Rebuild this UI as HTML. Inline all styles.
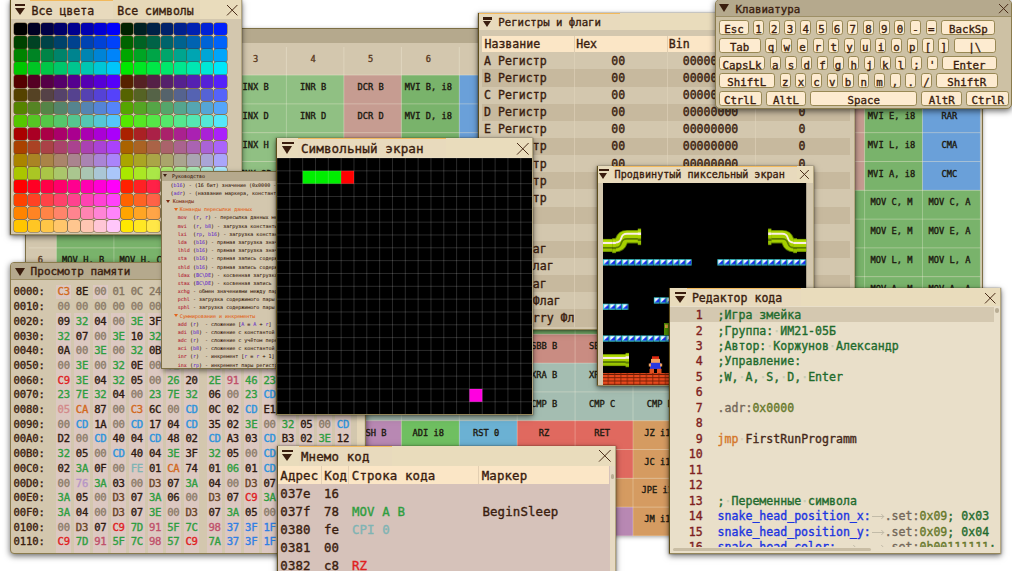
<!DOCTYPE html><html lang="ru"><head><meta charset="utf-8"><title>i8080 emulator</title><style>
html,body{margin:0;padding:0}
body{width:1012px;height:571px;overflow:hidden;background:#fff;position:relative;font-family:"DejaVu Sans Mono","Liberation Mono",monospace;color:#3a1d0e}
.win{position:absolute;background:#d3c7ae;box-sizing:border-box;border:1px solid #7d6f45;box-shadow:0 2px 6px rgba(0,0,0,.6);overflow:hidden}
.abs{position:absolute}
.wa{border-color:#e9dcbc #b3a680 #94865a #5e4e1c;border-top-width:0;box-shadow:0 0 1px .3px rgba(35,25,0,.45),0 2px 6px rgba(0,0,0,.55)}
.tb{position:absolute;left:0;top:0;right:0;background:#e9dcbc}
.tbi{background:#b5a98d}
.tab{position:absolute;top:0;bottom:0;background:#e8dabd;border-top:1px solid #f2b95c;box-sizing:border-box}
.t{position:absolute;white-space:pre}
body{-webkit-text-stroke:.36px currentColor}
.tri{position:absolute;width:0;height:0;border-style:solid;border-color:#3a1d0e transparent transparent transparent}
.bar{position:absolute;background:#3a1d0e}
svg{position:absolute;overflow:visible}
.c{position:absolute;text-align:center;font-size:8.70px;color:#1d1a10;white-space:pre;padding-right:4px;letter-spacing:.03px}
.k{position:absolute;box-sizing:border-box;background:#fdebd0;border:1px solid #988854;border-radius:2.8px;text-align:center;font-size:10.75px;white-space:pre}
.cg i{position:absolute;width:12.7px;height:12.5px;border-radius:2.5px;box-shadow:0 0 0 .5px rgba(80,55,20,.7)}</style></head><body>
<div class="win" style="left:25px;top:28px;width:958px;height:508px;box-shadow:0 1px 4px rgba(0,0,0,.35);border-bottom:none">
<div class="tb tbi" style="height:14px"></div>
<svg style="left:0;top:0" width="958" height="509"><rect x="2.60" y="18.00" width="951.80" height="488.90" fill="#d3c7ae"/><rect x="30.40" y="46.10" width="57.50" height="28.80" fill="#c9bda3"/><rect x="87.90" y="46.10" width="115.00" height="28.80" fill="#79b36b"/><rect x="202.90" y="46.10" width="115.00" height="28.80" fill="#90c083"/><rect x="317.90" y="46.10" width="57.50" height="28.80" fill="#c69c91"/><rect x="375.40" y="46.10" width="57.90" height="28.80" fill="#79b36b"/><rect x="433.30" y="46.10" width="57.90" height="28.80" fill="#6aa0d9"/><rect x="491.20" y="46.10" width="57.90" height="28.80" fill="#c9bda3"/><rect x="549.10" y="46.10" width="57.90" height="28.80" fill="#90c083"/><rect x="607.00" y="46.10" width="57.90" height="28.80" fill="#79b36b"/><rect x="664.90" y="46.10" width="57.90" height="28.80" fill="#c69c91"/><rect x="722.80" y="46.10" width="57.90" height="28.80" fill="#90c083"/><rect x="780.70" y="46.10" width="57.90" height="28.80" fill="#c69c91"/><rect x="838.60" y="46.10" width="57.90" height="28.80" fill="#79b36b"/><rect x="896.50" y="46.10" width="57.90" height="28.80" fill="#6aa0d9"/><rect x="30.40" y="74.90" width="57.50" height="28.80" fill="#c9bda3"/><rect x="87.90" y="74.90" width="115.00" height="28.80" fill="#79b36b"/><rect x="202.90" y="74.90" width="115.00" height="28.80" fill="#90c083"/><rect x="317.90" y="74.90" width="57.50" height="28.80" fill="#c69c91"/><rect x="375.40" y="74.90" width="57.90" height="28.80" fill="#79b36b"/><rect x="433.30" y="74.90" width="57.90" height="28.80" fill="#6aa0d9"/><rect x="491.20" y="74.90" width="57.90" height="28.80" fill="#c9bda3"/><rect x="549.10" y="74.90" width="57.90" height="28.80" fill="#90c083"/><rect x="607.00" y="74.90" width="57.90" height="28.80" fill="#79b36b"/><rect x="664.90" y="74.90" width="57.90" height="28.80" fill="#c69c91"/><rect x="722.80" y="74.90" width="57.90" height="28.80" fill="#90c083"/><rect x="780.70" y="74.90" width="57.90" height="28.80" fill="#c69c91"/><rect x="838.60" y="74.90" width="57.90" height="28.80" fill="#79b36b"/><rect x="896.50" y="74.90" width="57.90" height="28.80" fill="#6aa0d9"/><rect x="30.40" y="103.70" width="57.50" height="28.80" fill="#c9bda3"/><rect x="87.90" y="103.70" width="115.00" height="28.80" fill="#79b36b"/><rect x="202.90" y="103.70" width="115.00" height="28.80" fill="#90c083"/><rect x="317.90" y="103.70" width="57.50" height="28.80" fill="#c69c91"/><rect x="375.40" y="103.70" width="57.90" height="28.80" fill="#79b36b"/><rect x="433.30" y="103.70" width="57.90" height="28.80" fill="#6aa0d9"/><rect x="491.20" y="103.70" width="57.90" height="28.80" fill="#c9bda3"/><rect x="549.10" y="103.70" width="57.90" height="28.80" fill="#90c083"/><rect x="607.00" y="103.70" width="57.90" height="28.80" fill="#79b36b"/><rect x="664.90" y="103.70" width="57.90" height="28.80" fill="#c69c91"/><rect x="722.80" y="103.70" width="57.90" height="28.80" fill="#90c083"/><rect x="780.70" y="103.70" width="57.90" height="28.80" fill="#c69c91"/><rect x="838.60" y="103.70" width="57.90" height="28.80" fill="#79b36b"/><rect x="896.50" y="103.70" width="57.90" height="28.80" fill="#6aa0d9"/><rect x="30.40" y="132.50" width="57.50" height="28.80" fill="#c9bda3"/><rect x="87.90" y="132.50" width="115.00" height="28.80" fill="#79b36b"/><rect x="202.90" y="132.50" width="115.00" height="28.80" fill="#90c083"/><rect x="317.90" y="132.50" width="57.50" height="28.80" fill="#c69c91"/><rect x="375.40" y="132.50" width="57.90" height="28.80" fill="#79b36b"/><rect x="433.30" y="132.50" width="57.90" height="28.80" fill="#6aa0d9"/><rect x="491.20" y="132.50" width="57.90" height="28.80" fill="#c9bda3"/><rect x="549.10" y="132.50" width="57.90" height="28.80" fill="#90c083"/><rect x="607.00" y="132.50" width="57.90" height="28.80" fill="#79b36b"/><rect x="664.90" y="132.50" width="57.90" height="28.80" fill="#c69c91"/><rect x="722.80" y="132.50" width="57.90" height="28.80" fill="#90c083"/><rect x="780.70" y="132.50" width="57.90" height="28.80" fill="#c69c91"/><rect x="838.60" y="132.50" width="57.90" height="28.80" fill="#79b36b"/><rect x="896.50" y="132.50" width="57.90" height="28.80" fill="#6aa0d9"/><rect x="30.40" y="161.30" width="924.00" height="28.80" fill="#79b36b"/><rect x="30.40" y="190.10" width="924.00" height="28.80" fill="#79b36b"/><rect x="30.40" y="218.90" width="924.00" height="28.80" fill="#79b36b"/><rect x="30.40" y="247.70" width="345.00" height="28.80" fill="#79b36b"/><rect x="375.40" y="247.70" width="57.90" height="28.80" fill="#b79bc4"/><rect x="433.30" y="247.70" width="521.10" height="28.80" fill="#79b36b"/><rect x="30.40" y="276.50" width="924.00" height="28.80" fill="#79b36b"/><rect x="30.40" y="305.30" width="924.00" height="28.80" fill="#c98c82"/><rect x="30.40" y="334.10" width="924.00" height="28.80" fill="#a4bdb1"/><rect x="30.40" y="362.90" width="924.00" height="28.80" fill="#a4bdb1"/><rect x="30.40" y="391.70" width="57.50" height="28.80" fill="#e0695f"/><rect x="87.90" y="391.70" width="57.50" height="28.80" fill="#b888b3"/><rect x="145.40" y="391.70" width="115.00" height="28.80" fill="#d59b61"/><rect x="260.40" y="391.70" width="57.50" height="28.80" fill="#5fa6e0"/><rect x="317.90" y="391.70" width="57.50" height="28.80" fill="#b888b3"/><rect x="375.40" y="391.70" width="57.90" height="28.80" fill="#6fbf61"/><rect x="433.30" y="391.70" width="57.90" height="28.80" fill="#6bb1d3"/><rect x="491.20" y="391.70" width="115.80" height="28.80" fill="#e0695f"/><rect x="607.00" y="391.70" width="115.80" height="28.80" fill="#d59b61"/><rect x="722.80" y="391.70" width="115.80" height="28.80" fill="#5fa6e0"/><rect x="838.60" y="391.70" width="57.90" height="28.80" fill="#6fbf61"/><rect x="896.50" y="391.70" width="57.90" height="28.80" fill="#6bb1d3"/><rect x="30.40" y="420.50" width="57.50" height="28.80" fill="#e0695f"/><rect x="87.90" y="420.50" width="57.50" height="28.80" fill="#b888b3"/><rect x="145.40" y="420.50" width="57.50" height="28.80" fill="#d59b61"/><rect x="202.90" y="420.50" width="57.50" height="28.80" fill="#c2a46a"/><rect x="260.40" y="420.50" width="57.50" height="28.80" fill="#5fa6e0"/><rect x="317.90" y="420.50" width="57.50" height="28.80" fill="#b888b3"/><rect x="375.40" y="420.50" width="57.90" height="28.80" fill="#c98c82"/><rect x="433.30" y="420.50" width="57.90" height="28.80" fill="#6bb1d3"/><rect x="491.20" y="420.50" width="115.80" height="28.80" fill="#e0695f"/><rect x="607.00" y="420.50" width="57.90" height="28.80" fill="#d59b61"/><rect x="664.90" y="420.50" width="57.90" height="28.80" fill="#c2a46a"/><rect x="722.80" y="420.50" width="115.80" height="28.80" fill="#5fa6e0"/><rect x="838.60" y="420.50" width="57.90" height="28.80" fill="#c98c82"/><rect x="896.50" y="420.50" width="57.90" height="28.80" fill="#6bb1d3"/><rect x="30.40" y="449.30" width="57.50" height="28.80" fill="#e0695f"/><rect x="87.90" y="449.30" width="57.50" height="28.80" fill="#b888b3"/><rect x="145.40" y="449.30" width="57.50" height="28.80" fill="#d59b61"/><rect x="202.90" y="449.30" width="57.50" height="28.80" fill="#b888b3"/><rect x="260.40" y="449.30" width="57.50" height="28.80" fill="#5fa6e0"/><rect x="317.90" y="449.30" width="57.50" height="28.80" fill="#b888b3"/><rect x="375.40" y="449.30" width="57.90" height="28.80" fill="#a4bdb1"/><rect x="433.30" y="449.30" width="57.90" height="28.80" fill="#6bb1d3"/><rect x="491.20" y="449.30" width="57.90" height="28.80" fill="#e0695f"/><rect x="549.10" y="449.30" width="115.80" height="28.80" fill="#d59b61"/><rect x="664.90" y="449.30" width="57.90" height="28.80" fill="#79b36b"/><rect x="722.80" y="449.30" width="115.80" height="28.80" fill="#5fa6e0"/><rect x="838.60" y="449.30" width="57.90" height="28.80" fill="#a4bdb1"/><rect x="896.50" y="449.30" width="57.90" height="28.80" fill="#6bb1d3"/><rect x="30.40" y="478.10" width="57.50" height="28.80" fill="#e0695f"/><rect x="87.90" y="478.10" width="57.50" height="28.80" fill="#b888b3"/><rect x="145.40" y="478.10" width="57.50" height="28.80" fill="#d59b61"/><rect x="202.90" y="478.10" width="57.50" height="28.80" fill="#c9bda3"/><rect x="260.40" y="478.10" width="57.50" height="28.80" fill="#5fa6e0"/><rect x="317.90" y="478.10" width="57.50" height="28.80" fill="#b888b3"/><rect x="375.40" y="478.10" width="57.90" height="28.80" fill="#a4bdb1"/><rect x="433.30" y="478.10" width="57.90" height="28.80" fill="#6bb1d3"/><rect x="491.20" y="478.10" width="57.90" height="28.80" fill="#e0695f"/><rect x="549.10" y="478.10" width="57.90" height="28.80" fill="#b888b3"/><rect x="607.00" y="478.10" width="57.90" height="28.80" fill="#d59b61"/><rect x="664.90" y="478.10" width="57.90" height="28.80" fill="#c9bda3"/><rect x="722.80" y="478.10" width="115.80" height="28.80" fill="#5fa6e0"/><rect x="838.60" y="478.10" width="57.90" height="28.80" fill="#a4bdb1"/><rect x="896.50" y="478.10" width="57.90" height="28.80" fill="#6bb1d3"/><path d="M30.40 18.00V506.90M87.90 18.00V506.90M145.40 18.00V506.90M202.90 18.00V506.90M260.40 18.00V506.90M317.90 18.00V506.90M375.40 18.00V506.90M433.30 18.00V506.90M491.20 18.00V506.90M549.10 18.00V506.90M607.00 18.00V506.90M664.90 18.00V506.90M722.80 18.00V506.90M780.70 18.00V506.90M838.60 18.00V506.90M896.50 18.00V506.90M954.40 18.00V506.90M2.60 46.10H954.40M2.60 74.90H954.40M2.60 103.70H954.40M2.60 132.50H954.40M2.60 161.30H954.40M2.60 190.10H954.40M2.60 218.90H954.40M2.60 247.70H954.40M2.60 276.50H954.40M2.60 305.30H954.40M2.60 334.10H954.40M2.60 362.90H954.40M2.60 391.70H954.40M2.60 420.50H954.40M2.60 449.30H954.40M2.60 478.10H954.40M2.60 506.90H954.40" stroke="rgba(255,250,235,.28)" stroke-width="1" fill="none"/></svg>
<div class="c" style="left:30.40px;top:18.00px;width:53.50px;height:28.10px;line-height:24.70px;color:#5a3a22">0</div><div class="c" style="left:87.90px;top:18.00px;width:53.50px;height:28.10px;line-height:24.70px;color:#5a3a22">1</div><div class="c" style="left:145.40px;top:18.00px;width:53.50px;height:28.10px;line-height:24.70px;color:#5a3a22">2</div><div class="c" style="left:202.90px;top:18.00px;width:53.50px;height:28.10px;line-height:24.70px;color:#5a3a22">3</div><div class="c" style="left:260.40px;top:18.00px;width:53.50px;height:28.10px;line-height:24.70px;color:#5a3a22">4</div><div class="c" style="left:317.90px;top:18.00px;width:53.50px;height:28.10px;line-height:24.70px;color:#5a3a22">5</div><div class="c" style="left:375.40px;top:18.00px;width:53.90px;height:28.10px;line-height:24.70px;color:#5a3a22">6</div><div class="c" style="left:433.30px;top:18.00px;width:53.90px;height:28.10px;line-height:24.70px;color:#5a3a22">7</div><div class="c" style="left:491.20px;top:18.00px;width:53.90px;height:28.10px;line-height:24.70px;color:#5a3a22">8</div><div class="c" style="left:549.10px;top:18.00px;width:53.90px;height:28.10px;line-height:24.70px;color:#5a3a22">9</div><div class="c" style="left:607.00px;top:18.00px;width:53.90px;height:28.10px;line-height:24.70px;color:#5a3a22">A</div><div class="c" style="left:664.90px;top:18.00px;width:53.90px;height:28.10px;line-height:24.70px;color:#5a3a22">B</div><div class="c" style="left:722.80px;top:18.00px;width:53.90px;height:28.10px;line-height:24.70px;color:#5a3a22">C</div><div class="c" style="left:780.70px;top:18.00px;width:53.90px;height:28.10px;line-height:24.70px;color:#5a3a22">D</div><div class="c" style="left:838.60px;top:18.00px;width:53.90px;height:28.10px;line-height:24.70px;color:#5a3a22">E</div><div class="c" style="left:896.50px;top:18.00px;width:53.90px;height:28.10px;line-height:24.70px;color:#5a3a22">F</div><div class="c" style="left:2.60px;top:46.10px;width:23.80px;height:28.80px;line-height:24.40px;color:#5a3a22">0</div><div class="c" style="left:30.40px;top:46.10px;width:53.50px;height:28.80px;line-height:24.40px">NOP</div><div class="c" style="left:87.90px;top:46.10px;width:53.50px;height:28.80px;line-height:24.40px">LXI B, i16</div><div class="c" style="left:145.40px;top:46.10px;width:53.50px;height:28.80px;line-height:24.40px">STAX B</div><div class="c" style="left:202.90px;top:46.10px;width:53.50px;height:28.80px;line-height:24.40px">INX B</div><div class="c" style="left:260.40px;top:46.10px;width:53.50px;height:28.80px;line-height:24.40px">INR B</div><div class="c" style="left:317.90px;top:46.10px;width:53.50px;height:28.80px;line-height:24.40px">DCR B</div><div class="c" style="left:375.40px;top:46.10px;width:53.90px;height:28.80px;line-height:24.40px">MVI B, i8</div><div class="c" style="left:433.30px;top:46.10px;width:53.90px;height:28.80px;line-height:24.40px">RLC</div><div class="c" style="left:491.20px;top:46.10px;width:53.90px;height:28.80px;line-height:24.40px">*NOP</div><div class="c" style="left:549.10px;top:46.10px;width:53.90px;height:28.80px;line-height:24.40px">DAD B</div><div class="c" style="left:607.00px;top:46.10px;width:53.90px;height:28.80px;line-height:24.40px">LDAX B</div><div class="c" style="left:664.90px;top:46.10px;width:53.90px;height:28.80px;line-height:24.40px">DCX B</div><div class="c" style="left:722.80px;top:46.10px;width:53.90px;height:28.80px;line-height:24.40px">INR C</div><div class="c" style="left:780.70px;top:46.10px;width:53.90px;height:28.80px;line-height:24.40px">DCR C</div><div class="c" style="left:838.60px;top:46.10px;width:53.90px;height:28.80px;line-height:24.40px">MVI C, i8</div><div class="c" style="left:896.50px;top:46.10px;width:53.90px;height:28.80px;line-height:24.40px">RRC</div><div class="c" style="left:2.60px;top:74.90px;width:23.80px;height:28.80px;line-height:24.40px;color:#5a3a22">1</div><div class="c" style="left:30.40px;top:74.90px;width:53.50px;height:28.80px;line-height:24.40px">*NOP</div><div class="c" style="left:87.90px;top:74.90px;width:53.50px;height:28.80px;line-height:24.40px">LXI D, i16</div><div class="c" style="left:145.40px;top:74.90px;width:53.50px;height:28.80px;line-height:24.40px">STAX D</div><div class="c" style="left:202.90px;top:74.90px;width:53.50px;height:28.80px;line-height:24.40px">INX D</div><div class="c" style="left:260.40px;top:74.90px;width:53.50px;height:28.80px;line-height:24.40px">INR D</div><div class="c" style="left:317.90px;top:74.90px;width:53.50px;height:28.80px;line-height:24.40px">DCR D</div><div class="c" style="left:375.40px;top:74.90px;width:53.90px;height:28.80px;line-height:24.40px">MVI D, i8</div><div class="c" style="left:433.30px;top:74.90px;width:53.90px;height:28.80px;line-height:24.40px">RAL</div><div class="c" style="left:491.20px;top:74.90px;width:53.90px;height:28.80px;line-height:24.40px">*NOP</div><div class="c" style="left:549.10px;top:74.90px;width:53.90px;height:28.80px;line-height:24.40px">DAD D</div><div class="c" style="left:607.00px;top:74.90px;width:53.90px;height:28.80px;line-height:24.40px">LDAX D</div><div class="c" style="left:664.90px;top:74.90px;width:53.90px;height:28.80px;line-height:24.40px">DCX D</div><div class="c" style="left:722.80px;top:74.90px;width:53.90px;height:28.80px;line-height:24.40px">INR E</div><div class="c" style="left:780.70px;top:74.90px;width:53.90px;height:28.80px;line-height:24.40px">DCR E</div><div class="c" style="left:838.60px;top:74.90px;width:53.90px;height:28.80px;line-height:24.40px">MVI E, i8</div><div class="c" style="left:896.50px;top:74.90px;width:53.90px;height:28.80px;line-height:24.40px">RAR</div><div class="c" style="left:2.60px;top:103.70px;width:23.80px;height:28.80px;line-height:24.40px;color:#5a3a22">2</div><div class="c" style="left:30.40px;top:103.70px;width:53.50px;height:28.80px;line-height:24.40px">*NOP</div><div class="c" style="left:87.90px;top:103.70px;width:53.50px;height:28.80px;line-height:24.40px">LXI H, i16</div><div class="c" style="left:145.40px;top:103.70px;width:53.50px;height:28.80px;line-height:24.40px">SHLD a16</div><div class="c" style="left:202.90px;top:103.70px;width:53.50px;height:28.80px;line-height:24.40px">INX H</div><div class="c" style="left:260.40px;top:103.70px;width:53.50px;height:28.80px;line-height:24.40px">INR H</div><div class="c" style="left:317.90px;top:103.70px;width:53.50px;height:28.80px;line-height:24.40px">DCR H</div><div class="c" style="left:375.40px;top:103.70px;width:53.90px;height:28.80px;line-height:24.40px">MVI H, i8</div><div class="c" style="left:433.30px;top:103.70px;width:53.90px;height:28.80px;line-height:24.40px">DAA</div><div class="c" style="left:491.20px;top:103.70px;width:53.90px;height:28.80px;line-height:24.40px">*NOP</div><div class="c" style="left:549.10px;top:103.70px;width:53.90px;height:28.80px;line-height:24.40px">DAD H</div><div class="c" style="left:607.00px;top:103.70px;width:53.90px;height:28.80px;line-height:24.40px">LHLD a16</div><div class="c" style="left:664.90px;top:103.70px;width:53.90px;height:28.80px;line-height:24.40px">DCX H</div><div class="c" style="left:722.80px;top:103.70px;width:53.90px;height:28.80px;line-height:24.40px">INR L</div><div class="c" style="left:780.70px;top:103.70px;width:53.90px;height:28.80px;line-height:24.40px">DCR L</div><div class="c" style="left:838.60px;top:103.70px;width:53.90px;height:28.80px;line-height:24.40px">MVI L, i8</div><div class="c" style="left:896.50px;top:103.70px;width:53.90px;height:28.80px;line-height:24.40px">CMA</div><div class="c" style="left:2.60px;top:132.50px;width:23.80px;height:28.80px;line-height:24.40px;color:#5a3a22">3</div><div class="c" style="left:30.40px;top:132.50px;width:53.50px;height:28.80px;line-height:24.40px">*NOP</div><div class="c" style="left:87.90px;top:132.50px;width:53.50px;height:28.80px;line-height:24.40px">LXI SP, i16</div><div class="c" style="left:145.40px;top:132.50px;width:53.50px;height:28.80px;line-height:24.40px">STA a16</div><div class="c" style="left:202.90px;top:132.50px;width:53.50px;height:28.80px;line-height:24.40px">INX SP</div><div class="c" style="left:260.40px;top:132.50px;width:53.50px;height:28.80px;line-height:24.40px">INR M</div><div class="c" style="left:317.90px;top:132.50px;width:53.50px;height:28.80px;line-height:24.40px">DCR M</div><div class="c" style="left:375.40px;top:132.50px;width:53.90px;height:28.80px;line-height:24.40px">MVI M, i8</div><div class="c" style="left:433.30px;top:132.50px;width:53.90px;height:28.80px;line-height:24.40px">STC</div><div class="c" style="left:491.20px;top:132.50px;width:53.90px;height:28.80px;line-height:24.40px">*NOP</div><div class="c" style="left:549.10px;top:132.50px;width:53.90px;height:28.80px;line-height:24.40px">DAD SP</div><div class="c" style="left:607.00px;top:132.50px;width:53.90px;height:28.80px;line-height:24.40px">LDA a16</div><div class="c" style="left:664.90px;top:132.50px;width:53.90px;height:28.80px;line-height:24.40px">DCX SP</div><div class="c" style="left:722.80px;top:132.50px;width:53.90px;height:28.80px;line-height:24.40px">INR A</div><div class="c" style="left:780.70px;top:132.50px;width:53.90px;height:28.80px;line-height:24.40px">DCR A</div><div class="c" style="left:838.60px;top:132.50px;width:53.90px;height:28.80px;line-height:24.40px">MVI A, i8</div><div class="c" style="left:896.50px;top:132.50px;width:53.90px;height:28.80px;line-height:24.40px">CMC</div><div class="c" style="left:2.60px;top:161.30px;width:23.80px;height:28.80px;line-height:24.40px;color:#5a3a22">4</div><div class="c" style="left:30.40px;top:161.30px;width:53.50px;height:28.80px;line-height:24.40px">MOV B, B</div><div class="c" style="left:87.90px;top:161.30px;width:53.50px;height:28.80px;line-height:24.40px">MOV B, C</div><div class="c" style="left:145.40px;top:161.30px;width:53.50px;height:28.80px;line-height:24.40px">MOV B, D</div><div class="c" style="left:202.90px;top:161.30px;width:53.50px;height:28.80px;line-height:24.40px">MOV B, E</div><div class="c" style="left:260.40px;top:161.30px;width:53.50px;height:28.80px;line-height:24.40px">MOV B, H</div><div class="c" style="left:317.90px;top:161.30px;width:53.50px;height:28.80px;line-height:24.40px">MOV B, L</div><div class="c" style="left:375.40px;top:161.30px;width:53.90px;height:28.80px;line-height:24.40px">MOV B, M</div><div class="c" style="left:433.30px;top:161.30px;width:53.90px;height:28.80px;line-height:24.40px">MOV B, A</div><div class="c" style="left:491.20px;top:161.30px;width:53.90px;height:28.80px;line-height:24.40px">MOV C, B</div><div class="c" style="left:549.10px;top:161.30px;width:53.90px;height:28.80px;line-height:24.40px">MOV C, C</div><div class="c" style="left:607.00px;top:161.30px;width:53.90px;height:28.80px;line-height:24.40px">MOV C, D</div><div class="c" style="left:664.90px;top:161.30px;width:53.90px;height:28.80px;line-height:24.40px">MOV C, E</div><div class="c" style="left:722.80px;top:161.30px;width:53.90px;height:28.80px;line-height:24.40px">MOV C, H</div><div class="c" style="left:780.70px;top:161.30px;width:53.90px;height:28.80px;line-height:24.40px">MOV C, L</div><div class="c" style="left:838.60px;top:161.30px;width:53.90px;height:28.80px;line-height:24.40px">MOV C, M</div><div class="c" style="left:896.50px;top:161.30px;width:53.90px;height:28.80px;line-height:24.40px">MOV C, A</div><div class="c" style="left:2.60px;top:190.10px;width:23.80px;height:28.80px;line-height:24.40px;color:#5a3a22">5</div><div class="c" style="left:30.40px;top:190.10px;width:53.50px;height:28.80px;line-height:24.40px">MOV D, B</div><div class="c" style="left:87.90px;top:190.10px;width:53.50px;height:28.80px;line-height:24.40px">MOV D, C</div><div class="c" style="left:145.40px;top:190.10px;width:53.50px;height:28.80px;line-height:24.40px">MOV D, D</div><div class="c" style="left:202.90px;top:190.10px;width:53.50px;height:28.80px;line-height:24.40px">MOV D, E</div><div class="c" style="left:260.40px;top:190.10px;width:53.50px;height:28.80px;line-height:24.40px">MOV D, H</div><div class="c" style="left:317.90px;top:190.10px;width:53.50px;height:28.80px;line-height:24.40px">MOV D, L</div><div class="c" style="left:375.40px;top:190.10px;width:53.90px;height:28.80px;line-height:24.40px">MOV D, M</div><div class="c" style="left:433.30px;top:190.10px;width:53.90px;height:28.80px;line-height:24.40px">MOV D, A</div><div class="c" style="left:491.20px;top:190.10px;width:53.90px;height:28.80px;line-height:24.40px">MOV E, B</div><div class="c" style="left:549.10px;top:190.10px;width:53.90px;height:28.80px;line-height:24.40px">MOV E, C</div><div class="c" style="left:607.00px;top:190.10px;width:53.90px;height:28.80px;line-height:24.40px">MOV E, D</div><div class="c" style="left:664.90px;top:190.10px;width:53.90px;height:28.80px;line-height:24.40px">MOV E, E</div><div class="c" style="left:722.80px;top:190.10px;width:53.90px;height:28.80px;line-height:24.40px">MOV E, H</div><div class="c" style="left:780.70px;top:190.10px;width:53.90px;height:28.80px;line-height:24.40px">MOV E, L</div><div class="c" style="left:838.60px;top:190.10px;width:53.90px;height:28.80px;line-height:24.40px">MOV E, M</div><div class="c" style="left:896.50px;top:190.10px;width:53.90px;height:28.80px;line-height:24.40px">MOV E, A</div><div class="c" style="left:2.60px;top:218.90px;width:23.80px;height:28.80px;line-height:24.40px;color:#5a3a22">6</div><div class="c" style="left:30.40px;top:218.90px;width:53.50px;height:28.80px;line-height:24.40px">MOV H, B</div><div class="c" style="left:87.90px;top:218.90px;width:53.50px;height:28.80px;line-height:24.40px">MOV H, C</div><div class="c" style="left:145.40px;top:218.90px;width:53.50px;height:28.80px;line-height:24.40px">MOV H, D</div><div class="c" style="left:202.90px;top:218.90px;width:53.50px;height:28.80px;line-height:24.40px">MOV H, E</div><div class="c" style="left:260.40px;top:218.90px;width:53.50px;height:28.80px;line-height:24.40px">MOV H, H</div><div class="c" style="left:317.90px;top:218.90px;width:53.50px;height:28.80px;line-height:24.40px">MOV H, L</div><div class="c" style="left:375.40px;top:218.90px;width:53.90px;height:28.80px;line-height:24.40px">MOV H, M</div><div class="c" style="left:433.30px;top:218.90px;width:53.90px;height:28.80px;line-height:24.40px">MOV H, A</div><div class="c" style="left:491.20px;top:218.90px;width:53.90px;height:28.80px;line-height:24.40px">MOV L, B</div><div class="c" style="left:549.10px;top:218.90px;width:53.90px;height:28.80px;line-height:24.40px">MOV L, C</div><div class="c" style="left:607.00px;top:218.90px;width:53.90px;height:28.80px;line-height:24.40px">MOV L, D</div><div class="c" style="left:664.90px;top:218.90px;width:53.90px;height:28.80px;line-height:24.40px">MOV L, E</div><div class="c" style="left:722.80px;top:218.90px;width:53.90px;height:28.80px;line-height:24.40px">MOV L, H</div><div class="c" style="left:780.70px;top:218.90px;width:53.90px;height:28.80px;line-height:24.40px">MOV L, L</div><div class="c" style="left:838.60px;top:218.90px;width:53.90px;height:28.80px;line-height:24.40px">MOV L, M</div><div class="c" style="left:896.50px;top:218.90px;width:53.90px;height:28.80px;line-height:24.40px">MOV L, A</div><div class="c" style="left:2.60px;top:247.70px;width:23.80px;height:28.80px;line-height:24.40px;color:#5a3a22">7</div><div class="c" style="left:30.40px;top:247.70px;width:53.50px;height:28.80px;line-height:24.40px">MOV M, B</div><div class="c" style="left:87.90px;top:247.70px;width:53.50px;height:28.80px;line-height:24.40px">MOV M, C</div><div class="c" style="left:145.40px;top:247.70px;width:53.50px;height:28.80px;line-height:24.40px">MOV M, D</div><div class="c" style="left:202.90px;top:247.70px;width:53.50px;height:28.80px;line-height:24.40px">MOV M, E</div><div class="c" style="left:260.40px;top:247.70px;width:53.50px;height:28.80px;line-height:24.40px">MOV M, H</div><div class="c" style="left:317.90px;top:247.70px;width:53.50px;height:28.80px;line-height:24.40px">MOV M, L</div><div class="c" style="left:375.40px;top:247.70px;width:53.90px;height:28.80px;line-height:24.40px">HLT</div><div class="c" style="left:433.30px;top:247.70px;width:53.90px;height:28.80px;line-height:24.40px">MOV M, A</div><div class="c" style="left:491.20px;top:247.70px;width:53.90px;height:28.80px;line-height:24.40px">MOV A, B</div><div class="c" style="left:549.10px;top:247.70px;width:53.90px;height:28.80px;line-height:24.40px">MOV A, C</div><div class="c" style="left:607.00px;top:247.70px;width:53.90px;height:28.80px;line-height:24.40px">MOV A, D</div><div class="c" style="left:664.90px;top:247.70px;width:53.90px;height:28.80px;line-height:24.40px">MOV A, E</div><div class="c" style="left:722.80px;top:247.70px;width:53.90px;height:28.80px;line-height:24.40px">MOV A, H</div><div class="c" style="left:780.70px;top:247.70px;width:53.90px;height:28.80px;line-height:24.40px">MOV A, L</div><div class="c" style="left:838.60px;top:247.70px;width:53.90px;height:28.80px;line-height:24.40px">MOV A, M</div><div class="c" style="left:896.50px;top:247.70px;width:53.90px;height:28.80px;line-height:24.40px">MOV A, A</div><div class="c" style="left:2.60px;top:276.50px;width:23.80px;height:28.80px;line-height:24.40px;color:#5a3a22">8</div><div class="c" style="left:30.40px;top:276.50px;width:53.50px;height:28.80px;line-height:24.40px">ADD B</div><div class="c" style="left:87.90px;top:276.50px;width:53.50px;height:28.80px;line-height:24.40px">ADD C</div><div class="c" style="left:145.40px;top:276.50px;width:53.50px;height:28.80px;line-height:24.40px">ADD D</div><div class="c" style="left:202.90px;top:276.50px;width:53.50px;height:28.80px;line-height:24.40px">ADD E</div><div class="c" style="left:260.40px;top:276.50px;width:53.50px;height:28.80px;line-height:24.40px">ADD H</div><div class="c" style="left:317.90px;top:276.50px;width:53.50px;height:28.80px;line-height:24.40px">ADD L</div><div class="c" style="left:375.40px;top:276.50px;width:53.90px;height:28.80px;line-height:24.40px">ADD M</div><div class="c" style="left:433.30px;top:276.50px;width:53.90px;height:28.80px;line-height:24.40px">ADD A</div><div class="c" style="left:491.20px;top:276.50px;width:53.90px;height:28.80px;line-height:24.40px">ADC B</div><div class="c" style="left:549.10px;top:276.50px;width:53.90px;height:28.80px;line-height:24.40px">ADC C</div><div class="c" style="left:607.00px;top:276.50px;width:53.90px;height:28.80px;line-height:24.40px">ADC D</div><div class="c" style="left:664.90px;top:276.50px;width:53.90px;height:28.80px;line-height:24.40px">ADC E</div><div class="c" style="left:722.80px;top:276.50px;width:53.90px;height:28.80px;line-height:24.40px">ADC H</div><div class="c" style="left:780.70px;top:276.50px;width:53.90px;height:28.80px;line-height:24.40px">ADC L</div><div class="c" style="left:838.60px;top:276.50px;width:53.90px;height:28.80px;line-height:24.40px">ADC M</div><div class="c" style="left:896.50px;top:276.50px;width:53.90px;height:28.80px;line-height:24.40px">ADC A</div><div class="c" style="left:2.60px;top:305.30px;width:23.80px;height:28.80px;line-height:24.40px;color:#5a3a22">9</div><div class="c" style="left:30.40px;top:305.30px;width:53.50px;height:28.80px;line-height:24.40px">SUB B</div><div class="c" style="left:87.90px;top:305.30px;width:53.50px;height:28.80px;line-height:24.40px">SUB C</div><div class="c" style="left:145.40px;top:305.30px;width:53.50px;height:28.80px;line-height:24.40px">SUB D</div><div class="c" style="left:202.90px;top:305.30px;width:53.50px;height:28.80px;line-height:24.40px">SUB E</div><div class="c" style="left:260.40px;top:305.30px;width:53.50px;height:28.80px;line-height:24.40px">SUB H</div><div class="c" style="left:317.90px;top:305.30px;width:53.50px;height:28.80px;line-height:24.40px">SUB L</div><div class="c" style="left:375.40px;top:305.30px;width:53.90px;height:28.80px;line-height:24.40px">SUB M</div><div class="c" style="left:433.30px;top:305.30px;width:53.90px;height:28.80px;line-height:24.40px">SUB A</div><div class="c" style="left:491.20px;top:305.30px;width:53.90px;height:28.80px;line-height:24.40px">SBB B</div><div class="c" style="left:549.10px;top:305.30px;width:53.90px;height:28.80px;line-height:24.40px">SBB C</div><div class="c" style="left:607.00px;top:305.30px;width:53.90px;height:28.80px;line-height:24.40px">SBB D</div><div class="c" style="left:664.90px;top:305.30px;width:53.90px;height:28.80px;line-height:24.40px">SBB E</div><div class="c" style="left:722.80px;top:305.30px;width:53.90px;height:28.80px;line-height:24.40px">SBB H</div><div class="c" style="left:780.70px;top:305.30px;width:53.90px;height:28.80px;line-height:24.40px">SBB L</div><div class="c" style="left:838.60px;top:305.30px;width:53.90px;height:28.80px;line-height:24.40px">SBB M</div><div class="c" style="left:896.50px;top:305.30px;width:53.90px;height:28.80px;line-height:24.40px">SBB A</div><div class="c" style="left:2.60px;top:334.10px;width:23.80px;height:28.80px;line-height:24.40px;color:#5a3a22">A</div><div class="c" style="left:30.40px;top:334.10px;width:53.50px;height:28.80px;line-height:24.40px">ANA B</div><div class="c" style="left:87.90px;top:334.10px;width:53.50px;height:28.80px;line-height:24.40px">ANA C</div><div class="c" style="left:145.40px;top:334.10px;width:53.50px;height:28.80px;line-height:24.40px">ANA D</div><div class="c" style="left:202.90px;top:334.10px;width:53.50px;height:28.80px;line-height:24.40px">ANA E</div><div class="c" style="left:260.40px;top:334.10px;width:53.50px;height:28.80px;line-height:24.40px">ANA H</div><div class="c" style="left:317.90px;top:334.10px;width:53.50px;height:28.80px;line-height:24.40px">ANA L</div><div class="c" style="left:375.40px;top:334.10px;width:53.90px;height:28.80px;line-height:24.40px">ANA M</div><div class="c" style="left:433.30px;top:334.10px;width:53.90px;height:28.80px;line-height:24.40px">ANA A</div><div class="c" style="left:491.20px;top:334.10px;width:53.90px;height:28.80px;line-height:24.40px">XRA B</div><div class="c" style="left:549.10px;top:334.10px;width:53.90px;height:28.80px;line-height:24.40px">XRA C</div><div class="c" style="left:607.00px;top:334.10px;width:53.90px;height:28.80px;line-height:24.40px">XRA D</div><div class="c" style="left:664.90px;top:334.10px;width:53.90px;height:28.80px;line-height:24.40px">XRA E</div><div class="c" style="left:722.80px;top:334.10px;width:53.90px;height:28.80px;line-height:24.40px">XRA H</div><div class="c" style="left:780.70px;top:334.10px;width:53.90px;height:28.80px;line-height:24.40px">XRA L</div><div class="c" style="left:838.60px;top:334.10px;width:53.90px;height:28.80px;line-height:24.40px">XRA M</div><div class="c" style="left:896.50px;top:334.10px;width:53.90px;height:28.80px;line-height:24.40px">XRA A</div><div class="c" style="left:2.60px;top:362.90px;width:23.80px;height:28.80px;line-height:24.40px;color:#5a3a22">B</div><div class="c" style="left:30.40px;top:362.90px;width:53.50px;height:28.80px;line-height:24.40px">ORA B</div><div class="c" style="left:87.90px;top:362.90px;width:53.50px;height:28.80px;line-height:24.40px">ORA C</div><div class="c" style="left:145.40px;top:362.90px;width:53.50px;height:28.80px;line-height:24.40px">ORA D</div><div class="c" style="left:202.90px;top:362.90px;width:53.50px;height:28.80px;line-height:24.40px">ORA E</div><div class="c" style="left:260.40px;top:362.90px;width:53.50px;height:28.80px;line-height:24.40px">ORA H</div><div class="c" style="left:317.90px;top:362.90px;width:53.50px;height:28.80px;line-height:24.40px">ORA L</div><div class="c" style="left:375.40px;top:362.90px;width:53.90px;height:28.80px;line-height:24.40px">ORA M</div><div class="c" style="left:433.30px;top:362.90px;width:53.90px;height:28.80px;line-height:24.40px">ORA A</div><div class="c" style="left:491.20px;top:362.90px;width:53.90px;height:28.80px;line-height:24.40px">CMP B</div><div class="c" style="left:549.10px;top:362.90px;width:53.90px;height:28.80px;line-height:24.40px">CMP C</div><div class="c" style="left:607.00px;top:362.90px;width:53.90px;height:28.80px;line-height:24.40px">CMP D</div><div class="c" style="left:664.90px;top:362.90px;width:53.90px;height:28.80px;line-height:24.40px">CMP E</div><div class="c" style="left:722.80px;top:362.90px;width:53.90px;height:28.80px;line-height:24.40px">CMP H</div><div class="c" style="left:780.70px;top:362.90px;width:53.90px;height:28.80px;line-height:24.40px">CMP L</div><div class="c" style="left:838.60px;top:362.90px;width:53.90px;height:28.80px;line-height:24.40px">CMP M</div><div class="c" style="left:896.50px;top:362.90px;width:53.90px;height:28.80px;line-height:24.40px">CMP A</div><div class="c" style="left:2.60px;top:391.70px;width:23.80px;height:28.80px;line-height:24.40px;color:#5a3a22">C</div><div class="c" style="left:30.40px;top:391.70px;width:53.50px;height:28.80px;line-height:24.40px">RNZ</div><div class="c" style="left:87.90px;top:391.70px;width:53.50px;height:28.80px;line-height:24.40px">POP B</div><div class="c" style="left:145.40px;top:391.70px;width:53.50px;height:28.80px;line-height:24.40px">JNZ i16</div><div class="c" style="left:202.90px;top:391.70px;width:53.50px;height:28.80px;line-height:24.40px">JMP i16</div><div class="c" style="left:260.40px;top:391.70px;width:53.50px;height:28.80px;line-height:24.40px">CNZ i16</div><div class="c" style="left:317.90px;top:391.70px;width:53.50px;height:28.80px;line-height:24.40px">PUSH B</div><div class="c" style="left:375.40px;top:391.70px;width:53.90px;height:28.80px;line-height:24.40px">ADI i8</div><div class="c" style="left:433.30px;top:391.70px;width:53.90px;height:28.80px;line-height:24.40px">RST 0</div><div class="c" style="left:491.20px;top:391.70px;width:53.90px;height:28.80px;line-height:24.40px">RZ</div><div class="c" style="left:549.10px;top:391.70px;width:53.90px;height:28.80px;line-height:24.40px">RET</div><div class="c" style="left:607.00px;top:391.70px;width:53.90px;height:28.80px;line-height:24.40px">JZ i16</div><div class="c" style="left:664.90px;top:391.70px;width:53.90px;height:28.80px;line-height:24.40px">*JMP i16</div><div class="c" style="left:722.80px;top:391.70px;width:53.90px;height:28.80px;line-height:24.40px">CZ i16</div><div class="c" style="left:780.70px;top:391.70px;width:53.90px;height:28.80px;line-height:24.40px">CALL i16</div><div class="c" style="left:838.60px;top:391.70px;width:53.90px;height:28.80px;line-height:24.40px">ACI i8</div><div class="c" style="left:896.50px;top:391.70px;width:53.90px;height:28.80px;line-height:24.40px">RST 1</div><div class="c" style="left:2.60px;top:420.50px;width:23.80px;height:28.80px;line-height:24.40px;color:#5a3a22">D</div><div class="c" style="left:30.40px;top:420.50px;width:53.50px;height:28.80px;line-height:24.40px">RNC</div><div class="c" style="left:87.90px;top:420.50px;width:53.50px;height:28.80px;line-height:24.40px">POP D</div><div class="c" style="left:145.40px;top:420.50px;width:53.50px;height:28.80px;line-height:24.40px">JNC i16</div><div class="c" style="left:202.90px;top:420.50px;width:53.50px;height:28.80px;line-height:24.40px">OUT i8</div><div class="c" style="left:260.40px;top:420.50px;width:53.50px;height:28.80px;line-height:24.40px">CNC i16</div><div class="c" style="left:317.90px;top:420.50px;width:53.50px;height:28.80px;line-height:24.40px">PUSH D</div><div class="c" style="left:375.40px;top:420.50px;width:53.90px;height:28.80px;line-height:24.40px">SUI i8</div><div class="c" style="left:433.30px;top:420.50px;width:53.90px;height:28.80px;line-height:24.40px">RST 2</div><div class="c" style="left:491.20px;top:420.50px;width:53.90px;height:28.80px;line-height:24.40px">RC</div><div class="c" style="left:549.10px;top:420.50px;width:53.90px;height:28.80px;line-height:24.40px">*RET</div><div class="c" style="left:607.00px;top:420.50px;width:53.90px;height:28.80px;line-height:24.40px">JC i16</div><div class="c" style="left:664.90px;top:420.50px;width:53.90px;height:28.80px;line-height:24.40px">IN i8</div><div class="c" style="left:722.80px;top:420.50px;width:53.90px;height:28.80px;line-height:24.40px">CC i16</div><div class="c" style="left:780.70px;top:420.50px;width:53.90px;height:28.80px;line-height:24.40px">*CALL</div><div class="c" style="left:838.60px;top:420.50px;width:53.90px;height:28.80px;line-height:24.40px">SBI i8</div><div class="c" style="left:896.50px;top:420.50px;width:53.90px;height:28.80px;line-height:24.40px">RST 3</div><div class="c" style="left:2.60px;top:449.30px;width:23.80px;height:28.80px;line-height:24.40px;color:#5a3a22">E</div><div class="c" style="left:30.40px;top:449.30px;width:53.50px;height:28.80px;line-height:24.40px">RPO</div><div class="c" style="left:87.90px;top:449.30px;width:53.50px;height:28.80px;line-height:24.40px">POP H</div><div class="c" style="left:145.40px;top:449.30px;width:53.50px;height:28.80px;line-height:24.40px">JPO i16</div><div class="c" style="left:202.90px;top:449.30px;width:53.50px;height:28.80px;line-height:24.40px">XTHL</div><div class="c" style="left:260.40px;top:449.30px;width:53.50px;height:28.80px;line-height:24.40px">CPO i16</div><div class="c" style="left:317.90px;top:449.30px;width:53.50px;height:28.80px;line-height:24.40px">PUSH H</div><div class="c" style="left:375.40px;top:449.30px;width:53.90px;height:28.80px;line-height:24.40px">ANI i8</div><div class="c" style="left:433.30px;top:449.30px;width:53.90px;height:28.80px;line-height:24.40px">RST 4</div><div class="c" style="left:491.20px;top:449.30px;width:53.90px;height:28.80px;line-height:24.40px">RPE</div><div class="c" style="left:549.10px;top:449.30px;width:53.90px;height:28.80px;line-height:24.40px">PCHL</div><div class="c" style="left:607.00px;top:449.30px;width:53.90px;height:28.80px;line-height:24.40px">JPE i16</div><div class="c" style="left:664.90px;top:449.30px;width:53.90px;height:28.80px;line-height:24.40px">XCHG</div><div class="c" style="left:722.80px;top:449.30px;width:53.90px;height:28.80px;line-height:24.40px">CPE i16</div><div class="c" style="left:780.70px;top:449.30px;width:53.90px;height:28.80px;line-height:24.40px">*CALL</div><div class="c" style="left:838.60px;top:449.30px;width:53.90px;height:28.80px;line-height:24.40px">XRI i8</div><div class="c" style="left:896.50px;top:449.30px;width:53.90px;height:28.80px;line-height:24.40px">RST 5</div><div class="c" style="left:2.60px;top:478.10px;width:23.80px;height:28.80px;line-height:24.40px;color:#5a3a22">F</div><div class="c" style="left:30.40px;top:478.10px;width:53.50px;height:28.80px;line-height:24.40px">RP</div><div class="c" style="left:87.90px;top:478.10px;width:53.50px;height:28.80px;line-height:24.40px">POP PSW</div><div class="c" style="left:145.40px;top:478.10px;width:53.50px;height:28.80px;line-height:24.40px">JP i16</div><div class="c" style="left:202.90px;top:478.10px;width:53.50px;height:28.80px;line-height:24.40px">DI</div><div class="c" style="left:260.40px;top:478.10px;width:53.50px;height:28.80px;line-height:24.40px">CP i16</div><div class="c" style="left:317.90px;top:478.10px;width:53.50px;height:28.80px;line-height:24.40px">PUSH PSW</div><div class="c" style="left:375.40px;top:478.10px;width:53.90px;height:28.80px;line-height:24.40px">ORI i8</div><div class="c" style="left:433.30px;top:478.10px;width:53.90px;height:28.80px;line-height:24.40px">RST 6</div><div class="c" style="left:491.20px;top:478.10px;width:53.90px;height:28.80px;line-height:24.40px">RM</div><div class="c" style="left:549.10px;top:478.10px;width:53.90px;height:28.80px;line-height:24.40px">SPHL</div><div class="c" style="left:607.00px;top:478.10px;width:53.90px;height:28.80px;line-height:24.40px">JM i16</div><div class="c" style="left:664.90px;top:478.10px;width:53.90px;height:28.80px;line-height:24.40px">EI</div><div class="c" style="left:722.80px;top:478.10px;width:53.90px;height:28.80px;line-height:24.40px">CM i16</div><div class="c" style="left:780.70px;top:478.10px;width:53.90px;height:28.80px;line-height:24.40px">*CALL</div><div class="c" style="left:838.60px;top:478.10px;width:53.90px;height:28.80px;line-height:24.40px">CPI i8</div><div class="c" style="left:896.50px;top:478.10px;width:53.90px;height:28.80px;line-height:24.40px">RST 7</div>
</div>
<div class="win wa" style="left:477.5px;top:13.0px;width:377.0px;height:316.5px">
<div class="tb" style="height:17.3px"><div class="tab" style="left:0;width:141px"></div>
<div class="bar" style="left:4.33px;top:4.36px;width:9.54px;height:2.19px"></div><div class="tri" style="left:4.33px;top:8.27px;border-width:6.87px 4.77px 0 4.77px"></div>
<div class="t" style="left:19.80px;top:2.81px;font-size:10.70px;line-height:14.98px;letter-spacing:-0.02px;">Регистры и флаги</div>
</div>
<div class="abs" style="left:3.80px;top:22.50px;width:367.70px;height:16.70px;background:#fbe6c6"></div>
<div class="t" style="left:6.00px;top:22.77px;font-size:11.55px;line-height:16.17px;">Название</div>
<div class="t" style="left:97.70px;top:22.77px;font-size:11.55px;line-height:16.17px;">Hex</div>
<div class="abs" style="left:95.50px;top:22.50px;width:1px;height:16.70px;background:#e0cdb0"></div>
<div class="t" style="left:190.30px;top:22.77px;font-size:11.55px;line-height:16.17px;">Bin</div>
<div class="abs" style="left:188.10px;top:22.50px;width:1px;height:16.70px;background:#e0cdb0"></div>
<div class="t" style="left:278.70px;top:22.77px;font-size:11.55px;line-height:16.17px;">Dec</div>
<div class="abs" style="left:276.50px;top:22.50px;width:1px;height:16.70px;background:#e0cdb0"></div>
<div class="abs" style="left:3.80px;top:39.20px;width:367.70px;height:17.45px;background:#d3c7ae"></div>
<div class="abs" style="left:3.80px;top:39.20px;width:91.70px;height:17.15px;overflow:hidden"><div class="t" style="left:1.80px;top:0.49px;font-size:11.55px;line-height:16.17px;">A Регистр</div></div>
<div class="t" style="left:132.80px;top:39.69px;font-size:11.55px;line-height:16.17px;">00</div>
<div class="t" style="left:204.20px;top:39.69px;font-size:11.55px;line-height:16.17px;">00000000</div>
<div class="t" style="left:320.00px;top:39.69px;font-size:11.55px;line-height:16.17px;">0</div>
<div class="abs" style="left:3.80px;top:56.35px;width:367.70px;height:17.45px;background:#c7b99e"></div>
<div class="abs" style="left:3.80px;top:56.35px;width:91.70px;height:17.15px;overflow:hidden"><div class="t" style="left:1.80px;top:0.49px;font-size:11.55px;line-height:16.17px;">B Регистр</div></div>
<div class="t" style="left:132.80px;top:56.84px;font-size:11.55px;line-height:16.17px;">00</div>
<div class="t" style="left:204.20px;top:56.84px;font-size:11.55px;line-height:16.17px;">00000000</div>
<div class="t" style="left:320.00px;top:56.84px;font-size:11.55px;line-height:16.17px;">0</div>
<div class="abs" style="left:3.80px;top:73.50px;width:367.70px;height:17.45px;background:#d3c7ae"></div>
<div class="abs" style="left:3.80px;top:73.50px;width:91.70px;height:17.15px;overflow:hidden"><div class="t" style="left:1.80px;top:0.49px;font-size:11.55px;line-height:16.17px;">C Регистр</div></div>
<div class="t" style="left:132.80px;top:73.99px;font-size:11.55px;line-height:16.17px;">00</div>
<div class="t" style="left:204.20px;top:73.99px;font-size:11.55px;line-height:16.17px;">00000000</div>
<div class="t" style="left:320.00px;top:73.99px;font-size:11.55px;line-height:16.17px;">0</div>
<div class="abs" style="left:3.80px;top:90.65px;width:367.70px;height:17.45px;background:#c7b99e"></div>
<div class="abs" style="left:3.80px;top:90.65px;width:91.70px;height:17.15px;overflow:hidden"><div class="t" style="left:1.80px;top:0.49px;font-size:11.55px;line-height:16.17px;">D Регистр</div></div>
<div class="t" style="left:132.80px;top:91.14px;font-size:11.55px;line-height:16.17px;">00</div>
<div class="t" style="left:204.20px;top:91.14px;font-size:11.55px;line-height:16.17px;">00000000</div>
<div class="t" style="left:320.00px;top:91.14px;font-size:11.55px;line-height:16.17px;">0</div>
<div class="abs" style="left:3.80px;top:107.80px;width:367.70px;height:17.45px;background:#d3c7ae"></div>
<div class="abs" style="left:3.80px;top:107.80px;width:91.70px;height:17.15px;overflow:hidden"><div class="t" style="left:1.80px;top:0.49px;font-size:11.55px;line-height:16.17px;">E Регистр</div></div>
<div class="t" style="left:132.80px;top:108.29px;font-size:11.55px;line-height:16.17px;">00</div>
<div class="t" style="left:204.20px;top:108.29px;font-size:11.55px;line-height:16.17px;">00000000</div>
<div class="t" style="left:320.00px;top:108.29px;font-size:11.55px;line-height:16.17px;">0</div>
<div class="abs" style="left:3.80px;top:124.95px;width:367.70px;height:17.45px;background:#c7b99e"></div>
<div class="abs" style="left:3.80px;top:124.95px;width:91.70px;height:17.15px;overflow:hidden"><div class="t" style="left:1.80px;top:0.49px;font-size:11.55px;line-height:16.17px;">H Регистр</div></div>
<div class="t" style="left:132.80px;top:125.44px;font-size:11.55px;line-height:16.17px;">00</div>
<div class="t" style="left:204.20px;top:125.44px;font-size:11.55px;line-height:16.17px;">00000000</div>
<div class="t" style="left:320.00px;top:125.44px;font-size:11.55px;line-height:16.17px;">0</div>
<div class="abs" style="left:3.80px;top:142.10px;width:367.70px;height:17.45px;background:#d3c7ae"></div>
<div class="abs" style="left:3.80px;top:142.10px;width:91.70px;height:17.15px;overflow:hidden"><div class="t" style="left:1.80px;top:0.49px;font-size:11.55px;line-height:16.17px;">L Регистр</div></div>
<div class="t" style="left:132.80px;top:142.59px;font-size:11.55px;line-height:16.17px;">00</div>
<div class="t" style="left:204.20px;top:142.59px;font-size:11.55px;line-height:16.17px;">00000000</div>
<div class="t" style="left:320.00px;top:142.59px;font-size:11.55px;line-height:16.17px;">0</div>
<div class="abs" style="left:3.80px;top:159.25px;width:367.70px;height:17.45px;background:#c7b99e"></div>
<div class="abs" style="left:3.80px;top:159.25px;width:91.70px;height:17.15px;overflow:hidden"><div class="t" style="left:1.80px;top:0.49px;font-size:11.55px;line-height:16.17px;">M Регистр</div></div>
<div class="t" style="left:132.80px;top:159.74px;font-size:11.55px;line-height:16.17px;">00</div>
<div class="t" style="left:204.20px;top:159.74px;font-size:11.55px;line-height:16.17px;">00000000</div>
<div class="t" style="left:320.00px;top:159.74px;font-size:11.55px;line-height:16.17px;">0</div>
<div class="abs" style="left:3.80px;top:176.40px;width:367.70px;height:17.45px;background:#d3c7ae"></div>
<div class="abs" style="left:3.80px;top:176.40px;width:91.70px;height:17.15px;overflow:hidden"><div class="t" style="left:1.80px;top:0.49px;font-size:11.55px;line-height:16.17px;">W Регистр</div></div>
<div class="t" style="left:132.80px;top:176.89px;font-size:11.55px;line-height:16.17px;">00</div>
<div class="t" style="left:204.20px;top:176.89px;font-size:11.55px;line-height:16.17px;">00000000</div>
<div class="t" style="left:320.00px;top:176.89px;font-size:11.55px;line-height:16.17px;">0</div>
<div class="abs" style="left:3.80px;top:193.55px;width:367.70px;height:17.45px;background:#c7b99e"></div>
<div class="abs" style="left:3.80px;top:193.55px;width:91.70px;height:17.15px;overflow:hidden"><div class="t" style="left:1.80px;top:0.49px;font-size:11.55px;line-height:16.17px;">PC</div></div>
<div class="abs" style="left:3.80px;top:210.70px;width:367.70px;height:17.45px;background:#d3c7ae"></div>
<div class="abs" style="left:3.80px;top:210.70px;width:91.70px;height:17.15px;overflow:hidden"><div class="t" style="left:1.80px;top:0.49px;font-size:11.55px;line-height:16.17px;">SP</div></div>
<div class="abs" style="left:3.80px;top:227.85px;width:367.70px;height:17.45px;background:#c7b99e"></div>
<div class="abs" style="left:3.80px;top:227.85px;width:91.70px;height:17.15px;overflow:hidden"><div class="t" style="left:1.80px;top:0.49px;font-size:11.55px;line-height:16.17px;">Sign Флаг</div></div>
<div class="abs" style="left:3.80px;top:245.00px;width:367.70px;height:17.45px;background:#d3c7ae"></div>
<div class="abs" style="left:3.80px;top:245.00px;width:91.70px;height:17.15px;overflow:hidden"><div class="t" style="left:1.80px;top:0.49px;font-size:11.55px;line-height:16.17px;">Carry Флаг</div></div>
<div class="abs" style="left:3.80px;top:262.15px;width:367.70px;height:17.45px;background:#c7b99e"></div>
<div class="abs" style="left:3.80px;top:262.15px;width:91.70px;height:17.15px;overflow:hidden"><div class="t" style="left:1.80px;top:0.49px;font-size:11.55px;line-height:16.17px;">Zero Флаг</div></div>
<div class="abs" style="left:3.80px;top:279.30px;width:367.70px;height:17.45px;background:#d3c7ae"></div>
<div class="abs" style="left:3.80px;top:279.30px;width:91.70px;height:17.15px;overflow:hidden"><div class="t" style="left:1.80px;top:0.49px;font-size:11.55px;line-height:16.17px;">Parity Флаг</div></div>
<div class="abs" style="left:3.80px;top:296.45px;width:367.70px;height:17.45px;background:#c7b99e"></div>
<div class="abs" style="left:3.80px;top:296.45px;width:91.70px;height:17.15px;overflow:hidden"><div class="t" style="left:1.80px;top:0.49px;font-size:11.55px;line-height:16.17px;">Aux. Carry Флаг</div></div>
<div class="abs" style="left:95.50px;top:39.20px;width:1px;height:274.40px;background:rgba(225,213,190,.55)"></div>
<div class="abs" style="left:188.10px;top:39.20px;width:1px;height:274.40px;background:rgba(225,213,190,.55)"></div>
<div class="abs" style="left:276.50px;top:39.20px;width:1px;height:274.40px;background:rgba(225,213,190,.55)"></div>
</div>
<div class="win" style="left:715.0px;top:-0.6px;width:296.5px;height:109.4px;border-radius:5px;border-color:#8a7b4d;background:#cdc1a4">
<div class="tb tbi" style="height:15.6px;border-bottom:1px solid #9d8f66"></div>
<div class="tri" style="left:2.61px;top:3.83px;border-width:8.94px 5.59px 0 5.59px"></div>
<div class="t" style="left:19.50px;top:1.67px;font-size:10.75px;line-height:15.05px;">Клавиатура</div>
<svg style="left:282.90px;top:4.00px" width="9.20" height="9.20"><path d="M0 0L9.20 9.20M9.20 0L0 9.20" stroke="#4a2c18" stroke-width="1.00" fill="none"/></svg>
<div class="k" style="left:2.50px;top:20.00px;width:30.80px;height:14.80px;line-height:17.40px">Esc</div>
<div class="k" style="left:37.00px;top:20.00px;width:11.20px;height:14.80px;line-height:17.40px">1</div>
<div class="k" style="left:52.70px;top:20.00px;width:11.20px;height:14.80px;line-height:17.40px">2</div>
<div class="k" style="left:68.40px;top:20.00px;width:11.20px;height:14.80px;line-height:17.40px">3</div>
<div class="k" style="left:84.10px;top:20.00px;width:11.20px;height:14.80px;line-height:17.40px">4</div>
<div class="k" style="left:99.80px;top:20.00px;width:11.20px;height:14.80px;line-height:17.40px">5</div>
<div class="k" style="left:115.50px;top:20.00px;width:11.20px;height:14.80px;line-height:17.40px">6</div>
<div class="k" style="left:131.20px;top:20.00px;width:11.20px;height:14.80px;line-height:17.40px">7</div>
<div class="k" style="left:146.90px;top:20.00px;width:11.20px;height:14.80px;line-height:17.40px">8</div>
<div class="k" style="left:162.60px;top:20.00px;width:11.20px;height:14.80px;line-height:17.40px">9</div>
<div class="k" style="left:178.30px;top:20.00px;width:11.20px;height:14.80px;line-height:17.40px">0</div>
<div class="k" style="left:194.00px;top:20.00px;width:11.20px;height:14.80px;line-height:17.40px">-</div>
<div class="k" style="left:209.70px;top:20.00px;width:11.20px;height:14.80px;line-height:17.40px">=</div>
<div class="k" style="left:225.40px;top:20.00px;width:54.00px;height:14.80px;line-height:17.40px">BackSp</div>
<div class="k" style="left:2.50px;top:37.60px;width:42.20px;height:14.80px;line-height:17.40px">Tab</div>
<div class="k" style="left:49.40px;top:37.60px;width:11.20px;height:14.80px;line-height:17.40px">q</div>
<div class="k" style="left:65.10px;top:37.60px;width:11.20px;height:14.80px;line-height:17.40px">w</div>
<div class="k" style="left:80.80px;top:37.60px;width:11.20px;height:14.80px;line-height:17.40px">e</div>
<div class="k" style="left:96.50px;top:37.60px;width:11.20px;height:14.80px;line-height:17.40px">r</div>
<div class="k" style="left:112.20px;top:37.60px;width:11.20px;height:14.80px;line-height:17.40px">t</div>
<div class="k" style="left:127.90px;top:37.60px;width:11.20px;height:14.80px;line-height:17.40px">y</div>
<div class="k" style="left:143.60px;top:37.60px;width:11.20px;height:14.80px;line-height:17.40px">u</div>
<div class="k" style="left:159.30px;top:37.60px;width:11.20px;height:14.80px;line-height:17.40px">i</div>
<div class="k" style="left:175.00px;top:37.60px;width:11.20px;height:14.80px;line-height:17.40px">o</div>
<div class="k" style="left:190.70px;top:37.60px;width:11.20px;height:14.80px;line-height:17.40px">p</div>
<div class="k" style="left:206.40px;top:37.60px;width:11.20px;height:14.80px;line-height:17.40px">[</div>
<div class="k" style="left:222.10px;top:37.60px;width:11.20px;height:14.80px;line-height:17.40px">]</div>
<div class="k" style="left:237.50px;top:37.60px;width:42.50px;height:14.80px;line-height:17.40px">|\</div>
<div class="k" style="left:2.50px;top:55.20px;width:46.90px;height:14.80px;line-height:17.40px">CapsLk</div>
<div class="k" style="left:53.70px;top:55.20px;width:11.20px;height:14.80px;line-height:17.40px">a</div>
<div class="k" style="left:69.40px;top:55.20px;width:11.20px;height:14.80px;line-height:17.40px">s</div>
<div class="k" style="left:85.10px;top:55.20px;width:11.20px;height:14.80px;line-height:17.40px">d</div>
<div class="k" style="left:100.80px;top:55.20px;width:11.20px;height:14.80px;line-height:17.40px">f</div>
<div class="k" style="left:116.50px;top:55.20px;width:11.20px;height:14.80px;line-height:17.40px">g</div>
<div class="k" style="left:132.20px;top:55.20px;width:11.20px;height:14.80px;line-height:17.40px">h</div>
<div class="k" style="left:147.90px;top:55.20px;width:11.20px;height:14.80px;line-height:17.40px">j</div>
<div class="k" style="left:163.60px;top:55.20px;width:11.20px;height:14.80px;line-height:17.40px">k</div>
<div class="k" style="left:179.30px;top:55.20px;width:11.20px;height:14.80px;line-height:17.40px">l</div>
<div class="k" style="left:195.00px;top:55.20px;width:11.20px;height:14.80px;line-height:17.40px">;</div>
<div class="k" style="left:210.70px;top:55.20px;width:11.20px;height:14.80px;line-height:17.40px">'</div>
<div class="k" style="left:226.00px;top:55.20px;width:54.60px;height:14.80px;line-height:17.40px">Enter</div>
<div class="k" style="left:2.50px;top:72.90px;width:56.50px;height:14.80px;line-height:17.40px">ShiftL</div>
<div class="k" style="left:63.60px;top:72.90px;width:11.20px;height:14.80px;line-height:17.40px">z</div>
<div class="k" style="left:79.30px;top:72.90px;width:11.20px;height:14.80px;line-height:17.40px">x</div>
<div class="k" style="left:95.00px;top:72.90px;width:11.20px;height:14.80px;line-height:17.40px">c</div>
<div class="k" style="left:110.70px;top:72.90px;width:11.20px;height:14.80px;line-height:17.40px">v</div>
<div class="k" style="left:126.40px;top:72.90px;width:11.20px;height:14.80px;line-height:17.40px">b</div>
<div class="k" style="left:142.10px;top:72.90px;width:11.20px;height:14.80px;line-height:17.40px">n</div>
<div class="k" style="left:157.80px;top:72.90px;width:11.20px;height:14.80px;line-height:17.40px">m</div>
<div class="k" style="left:173.50px;top:72.90px;width:11.20px;height:14.80px;line-height:17.40px">,</div>
<div class="k" style="left:189.20px;top:72.90px;width:11.20px;height:14.80px;line-height:17.40px">.</div>
<div class="k" style="left:204.90px;top:72.90px;width:11.20px;height:14.80px;line-height:17.40px">/</div>
<div class="k" style="left:219.90px;top:72.90px;width:61.70px;height:14.80px;line-height:17.40px">ShiftR</div>
<div class="k" style="left:2.50px;top:90.50px;width:43.20px;height:14.80px;line-height:17.40px">CtrlL</div>
<div class="k" style="left:49.70px;top:90.50px;width:40.70px;height:14.80px;line-height:17.40px">AltL</div>
<div class="k" style="left:94.10px;top:90.50px;width:107.30px;height:14.80px;line-height:17.40px">Space</div>
<div class="k" style="left:205.40px;top:90.50px;width:40.70px;height:14.80px;line-height:17.40px">AltR</div>
<div class="k" style="left:250.10px;top:90.50px;width:43.20px;height:14.80px;line-height:17.40px">CtrlR</div>
</div>
<div class="win wa" style="left:9.5px;top:0.0px;width:232.5px;height:235.2px">
<div class="tb" style="height:18.9px">
<div class="tab" style="left:19px;width:83.5px"></div>
<div class="abs" style="left:102.5px;top:0;width:87px;bottom:0;background:#e6d8b8"></div>
<div class="bar" style="left:4.91px;top:4.16px;width:10.07px;height:2.32px"></div><div class="tri" style="left:4.91px;top:8.29px;border-width:7.25px 5.04px 0 5.04px"></div>
<div class="t" style="left:21.10px;top:2.61px;font-size:11.55px;line-height:16.17px;">Все цвета</div>
<div class="t" style="left:106.80px;top:2.61px;font-size:11.55px;line-height:16.17px;">Все символы</div>
<svg style="left:216.30px;top:5.10px" width="10.40" height="10.40"><path d="M0 0L10.40 10.40M10.40 0L0 10.40" stroke="#4a2c18" stroke-width="1.00" fill="none"/></svg>
</div>
<div class="cg"><i style="left:3.80px;top:22.90px;background:#000000"></i><i style="left:17.11px;top:22.90px;background:#000024"></i><i style="left:30.42px;top:22.90px;background:#000047"></i><i style="left:43.73px;top:22.90px;background:#00006b"></i><i style="left:57.04px;top:22.90px;background:#00008f"></i><i style="left:70.35px;top:22.90px;background:#0000b2"></i><i style="left:83.66px;top:22.90px;background:#0000d6"></i><i style="left:96.97px;top:22.90px;background:#0000fa"></i><i style="left:110.28px;top:22.90px;background:#002100"></i><i style="left:123.59px;top:22.90px;background:#002124"></i><i style="left:136.90px;top:22.90px;background:#002147"></i><i style="left:150.21px;top:22.90px;background:#00216b"></i><i style="left:163.52px;top:22.90px;background:#00218f"></i><i style="left:176.83px;top:22.90px;background:#0021b2"></i><i style="left:190.14px;top:22.90px;background:#0021d6"></i><i style="left:203.45px;top:22.90px;background:#0021fa"></i><i style="left:3.80px;top:36.03px;background:#004200"></i><i style="left:17.11px;top:36.03px;background:#004224"></i><i style="left:30.42px;top:36.03px;background:#004247"></i><i style="left:43.73px;top:36.03px;background:#00426b"></i><i style="left:57.04px;top:36.03px;background:#00428f"></i><i style="left:70.35px;top:36.03px;background:#0042b2"></i><i style="left:83.66px;top:36.03px;background:#0042d6"></i><i style="left:96.97px;top:36.03px;background:#0042fa"></i><i style="left:110.28px;top:36.03px;background:#006300"></i><i style="left:123.59px;top:36.03px;background:#006324"></i><i style="left:136.90px;top:36.03px;background:#006347"></i><i style="left:150.21px;top:36.03px;background:#00636b"></i><i style="left:163.52px;top:36.03px;background:#00638f"></i><i style="left:176.83px;top:36.03px;background:#0063b2"></i><i style="left:190.14px;top:36.03px;background:#0063d6"></i><i style="left:203.45px;top:36.03px;background:#0063fa"></i><i style="left:3.80px;top:49.16px;background:#008400"></i><i style="left:17.11px;top:49.16px;background:#008424"></i><i style="left:30.42px;top:49.16px;background:#008447"></i><i style="left:43.73px;top:49.16px;background:#00846b"></i><i style="left:57.04px;top:49.16px;background:#00848f"></i><i style="left:70.35px;top:49.16px;background:#0084b2"></i><i style="left:83.66px;top:49.16px;background:#0084d6"></i><i style="left:96.97px;top:49.16px;background:#0084fa"></i><i style="left:110.28px;top:49.16px;background:#00a500"></i><i style="left:123.59px;top:49.16px;background:#00a524"></i><i style="left:136.90px;top:49.16px;background:#00a547"></i><i style="left:150.21px;top:49.16px;background:#00a56b"></i><i style="left:163.52px;top:49.16px;background:#00a58f"></i><i style="left:176.83px;top:49.16px;background:#00a5b2"></i><i style="left:190.14px;top:49.16px;background:#00a5d6"></i><i style="left:203.45px;top:49.16px;background:#00a5fa"></i><i style="left:3.80px;top:62.29px;background:#00c600"></i><i style="left:17.11px;top:62.29px;background:#00c624"></i><i style="left:30.42px;top:62.29px;background:#00c647"></i><i style="left:43.73px;top:62.29px;background:#00c66b"></i><i style="left:57.04px;top:62.29px;background:#00c68f"></i><i style="left:70.35px;top:62.29px;background:#00c6b2"></i><i style="left:83.66px;top:62.29px;background:#00c6d6"></i><i style="left:96.97px;top:62.29px;background:#00c6fa"></i><i style="left:110.28px;top:62.29px;background:#00e700"></i><i style="left:123.59px;top:62.29px;background:#00e724"></i><i style="left:136.90px;top:62.29px;background:#00e747"></i><i style="left:150.21px;top:62.29px;background:#00e76b"></i><i style="left:163.52px;top:62.29px;background:#00e78f"></i><i style="left:176.83px;top:62.29px;background:#00e7b2"></i><i style="left:190.14px;top:62.29px;background:#00e7d6"></i><i style="left:203.45px;top:62.29px;background:#00e7fa"></i><i style="left:3.80px;top:75.42px;background:#550000"></i><i style="left:17.11px;top:75.42px;background:#550024"></i><i style="left:30.42px;top:75.42px;background:#550047"></i><i style="left:43.73px;top:75.42px;background:#55006b"></i><i style="left:57.04px;top:75.42px;background:#55008f"></i><i style="left:70.35px;top:75.42px;background:#5500b2"></i><i style="left:83.66px;top:75.42px;background:#5500d6"></i><i style="left:96.97px;top:75.42px;background:#5500fa"></i><i style="left:110.28px;top:75.42px;background:#552100"></i><i style="left:123.59px;top:75.42px;background:#552124"></i><i style="left:136.90px;top:75.42px;background:#552147"></i><i style="left:150.21px;top:75.42px;background:#55216b"></i><i style="left:163.52px;top:75.42px;background:#55218f"></i><i style="left:176.83px;top:75.42px;background:#5521b2"></i><i style="left:190.14px;top:75.42px;background:#5521d6"></i><i style="left:203.45px;top:75.42px;background:#5521fa"></i><i style="left:3.80px;top:88.55px;background:#554200"></i><i style="left:17.11px;top:88.55px;background:#554224"></i><i style="left:30.42px;top:88.55px;background:#554247"></i><i style="left:43.73px;top:88.55px;background:#55426b"></i><i style="left:57.04px;top:88.55px;background:#55428f"></i><i style="left:70.35px;top:88.55px;background:#5542b2"></i><i style="left:83.66px;top:88.55px;background:#5542d6"></i><i style="left:96.97px;top:88.55px;background:#5542fa"></i><i style="left:110.28px;top:88.55px;background:#556300"></i><i style="left:123.59px;top:88.55px;background:#556324"></i><i style="left:136.90px;top:88.55px;background:#556347"></i><i style="left:150.21px;top:88.55px;background:#55636b"></i><i style="left:163.52px;top:88.55px;background:#55638f"></i><i style="left:176.83px;top:88.55px;background:#5563b2"></i><i style="left:190.14px;top:88.55px;background:#5563d6"></i><i style="left:203.45px;top:88.55px;background:#5563fa"></i><i style="left:3.80px;top:101.68px;background:#558400"></i><i style="left:17.11px;top:101.68px;background:#558424"></i><i style="left:30.42px;top:101.68px;background:#558447"></i><i style="left:43.73px;top:101.68px;background:#55846b"></i><i style="left:57.04px;top:101.68px;background:#55848f"></i><i style="left:70.35px;top:101.68px;background:#5584b2"></i><i style="left:83.66px;top:101.68px;background:#5584d6"></i><i style="left:96.97px;top:101.68px;background:#5584fa"></i><i style="left:110.28px;top:101.68px;background:#55a500"></i><i style="left:123.59px;top:101.68px;background:#55a524"></i><i style="left:136.90px;top:101.68px;background:#55a547"></i><i style="left:150.21px;top:101.68px;background:#55a56b"></i><i style="left:163.52px;top:101.68px;background:#55a58f"></i><i style="left:176.83px;top:101.68px;background:#55a5b2"></i><i style="left:190.14px;top:101.68px;background:#55a5d6"></i><i style="left:203.45px;top:101.68px;background:#55a5fa"></i><i style="left:3.80px;top:114.81px;background:#55c600"></i><i style="left:17.11px;top:114.81px;background:#55c624"></i><i style="left:30.42px;top:114.81px;background:#55c647"></i><i style="left:43.73px;top:114.81px;background:#55c66b"></i><i style="left:57.04px;top:114.81px;background:#55c68f"></i><i style="left:70.35px;top:114.81px;background:#55c6b2"></i><i style="left:83.66px;top:114.81px;background:#55c6d6"></i><i style="left:96.97px;top:114.81px;background:#55c6fa"></i><i style="left:110.28px;top:114.81px;background:#55e700"></i><i style="left:123.59px;top:114.81px;background:#55e724"></i><i style="left:136.90px;top:114.81px;background:#55e747"></i><i style="left:150.21px;top:114.81px;background:#55e76b"></i><i style="left:163.52px;top:114.81px;background:#55e78f"></i><i style="left:176.83px;top:114.81px;background:#55e7b2"></i><i style="left:190.14px;top:114.81px;background:#55e7d6"></i><i style="left:203.45px;top:114.81px;background:#55e7fa"></i><i style="left:3.80px;top:127.94px;background:#aa0000"></i><i style="left:17.11px;top:127.94px;background:#aa0024"></i><i style="left:30.42px;top:127.94px;background:#aa0047"></i><i style="left:43.73px;top:127.94px;background:#aa006b"></i><i style="left:57.04px;top:127.94px;background:#aa008f"></i><i style="left:70.35px;top:127.94px;background:#aa00b2"></i><i style="left:83.66px;top:127.94px;background:#aa00d6"></i><i style="left:96.97px;top:127.94px;background:#aa00fa"></i><i style="left:110.28px;top:127.94px;background:#aa2100"></i><i style="left:123.59px;top:127.94px;background:#aa2124"></i><i style="left:136.90px;top:127.94px;background:#aa2147"></i><i style="left:150.21px;top:127.94px;background:#aa216b"></i><i style="left:163.52px;top:127.94px;background:#aa218f"></i><i style="left:176.83px;top:127.94px;background:#aa21b2"></i><i style="left:190.14px;top:127.94px;background:#aa21d6"></i><i style="left:203.45px;top:127.94px;background:#aa21fa"></i><i style="left:3.80px;top:141.07px;background:#aa4200"></i><i style="left:17.11px;top:141.07px;background:#aa4224"></i><i style="left:30.42px;top:141.07px;background:#aa4247"></i><i style="left:43.73px;top:141.07px;background:#aa426b"></i><i style="left:57.04px;top:141.07px;background:#aa428f"></i><i style="left:70.35px;top:141.07px;background:#aa42b2"></i><i style="left:83.66px;top:141.07px;background:#aa42d6"></i><i style="left:96.97px;top:141.07px;background:#aa42fa"></i><i style="left:110.28px;top:141.07px;background:#aa6300"></i><i style="left:123.59px;top:141.07px;background:#aa6324"></i><i style="left:136.90px;top:141.07px;background:#aa6347"></i><i style="left:150.21px;top:141.07px;background:#aa636b"></i><i style="left:163.52px;top:141.07px;background:#aa638f"></i><i style="left:176.83px;top:141.07px;background:#aa63b2"></i><i style="left:190.14px;top:141.07px;background:#aa63d6"></i><i style="left:203.45px;top:141.07px;background:#aa63fa"></i><i style="left:3.80px;top:154.20px;background:#aa8400"></i><i style="left:17.11px;top:154.20px;background:#aa8424"></i><i style="left:30.42px;top:154.20px;background:#aa8447"></i><i style="left:43.73px;top:154.20px;background:#aa846b"></i><i style="left:57.04px;top:154.20px;background:#aa848f"></i><i style="left:70.35px;top:154.20px;background:#aa84b2"></i><i style="left:83.66px;top:154.20px;background:#aa84d6"></i><i style="left:96.97px;top:154.20px;background:#aa84fa"></i><i style="left:110.28px;top:154.20px;background:#aaa500"></i><i style="left:123.59px;top:154.20px;background:#aaa524"></i><i style="left:136.90px;top:154.20px;background:#aaa547"></i><i style="left:150.21px;top:154.20px;background:#aaa56b"></i><i style="left:163.52px;top:154.20px;background:#aaa58f"></i><i style="left:176.83px;top:154.20px;background:#aaa5b2"></i><i style="left:190.14px;top:154.20px;background:#aaa5d6"></i><i style="left:203.45px;top:154.20px;background:#aaa5fa"></i><i style="left:3.80px;top:167.33px;background:#aac600"></i><i style="left:17.11px;top:167.33px;background:#aac624"></i><i style="left:30.42px;top:167.33px;background:#aac647"></i><i style="left:43.73px;top:167.33px;background:#aac66b"></i><i style="left:57.04px;top:167.33px;background:#aac68f"></i><i style="left:70.35px;top:167.33px;background:#aac6b2"></i><i style="left:83.66px;top:167.33px;background:#aac6d6"></i><i style="left:96.97px;top:167.33px;background:#aac6fa"></i><i style="left:110.28px;top:167.33px;background:#aae700"></i><i style="left:123.59px;top:167.33px;background:#aae724"></i><i style="left:136.90px;top:167.33px;background:#aae747"></i><i style="left:150.21px;top:167.33px;background:#aae76b"></i><i style="left:163.52px;top:167.33px;background:#aae78f"></i><i style="left:176.83px;top:167.33px;background:#aae7b2"></i><i style="left:190.14px;top:167.33px;background:#aae7d6"></i><i style="left:203.45px;top:167.33px;background:#aae7fa"></i><i style="left:3.80px;top:180.46px;background:#ff0000"></i><i style="left:17.11px;top:180.46px;background:#ff0024"></i><i style="left:30.42px;top:180.46px;background:#ff0047"></i><i style="left:43.73px;top:180.46px;background:#ff006b"></i><i style="left:57.04px;top:180.46px;background:#ff008f"></i><i style="left:70.35px;top:180.46px;background:#ff00b2"></i><i style="left:83.66px;top:180.46px;background:#ff00d6"></i><i style="left:96.97px;top:180.46px;background:#ff00fa"></i><i style="left:110.28px;top:180.46px;background:#ff2100"></i><i style="left:123.59px;top:180.46px;background:#ff2124"></i><i style="left:136.90px;top:180.46px;background:#ff2147"></i><i style="left:150.21px;top:180.46px;background:#ff216b"></i><i style="left:163.52px;top:180.46px;background:#ff218f"></i><i style="left:176.83px;top:180.46px;background:#ff21b2"></i><i style="left:190.14px;top:180.46px;background:#ff21d6"></i><i style="left:203.45px;top:180.46px;background:#ff21fa"></i><i style="left:3.80px;top:193.59px;background:#ff4200"></i><i style="left:17.11px;top:193.59px;background:#ff4224"></i><i style="left:30.42px;top:193.59px;background:#ff4247"></i><i style="left:43.73px;top:193.59px;background:#ff426b"></i><i style="left:57.04px;top:193.59px;background:#ff428f"></i><i style="left:70.35px;top:193.59px;background:#ff42b2"></i><i style="left:83.66px;top:193.59px;background:#ff42d6"></i><i style="left:96.97px;top:193.59px;background:#ff42fa"></i><i style="left:110.28px;top:193.59px;background:#ff6300"></i><i style="left:123.59px;top:193.59px;background:#ff6324"></i><i style="left:136.90px;top:193.59px;background:#ff6347"></i><i style="left:150.21px;top:193.59px;background:#ff636b"></i><i style="left:163.52px;top:193.59px;background:#ff638f"></i><i style="left:176.83px;top:193.59px;background:#ff63b2"></i><i style="left:190.14px;top:193.59px;background:#ff63d6"></i><i style="left:203.45px;top:193.59px;background:#ff63fa"></i><i style="left:3.80px;top:206.72px;background:#ff8400"></i><i style="left:17.11px;top:206.72px;background:#ff8424"></i><i style="left:30.42px;top:206.72px;background:#ff8447"></i><i style="left:43.73px;top:206.72px;background:#ff846b"></i><i style="left:57.04px;top:206.72px;background:#ff848f"></i><i style="left:70.35px;top:206.72px;background:#ff84b2"></i><i style="left:83.66px;top:206.72px;background:#ff84d6"></i><i style="left:96.97px;top:206.72px;background:#ff84fa"></i><i style="left:110.28px;top:206.72px;background:#ffa500"></i><i style="left:123.59px;top:206.72px;background:#ffa524"></i><i style="left:136.90px;top:206.72px;background:#ffa547"></i><i style="left:150.21px;top:206.72px;background:#ffa56b"></i><i style="left:163.52px;top:206.72px;background:#ffa58f"></i><i style="left:176.83px;top:206.72px;background:#ffa5b2"></i><i style="left:190.14px;top:206.72px;background:#ffa5d6"></i><i style="left:203.45px;top:206.72px;background:#ffa5fa"></i><i style="left:3.80px;top:219.85px;background:#ffc600"></i><i style="left:17.11px;top:219.85px;background:#ffc624"></i><i style="left:30.42px;top:219.85px;background:#ffc647"></i><i style="left:43.73px;top:219.85px;background:#ffc66b"></i><i style="left:57.04px;top:219.85px;background:#ffc68f"></i><i style="left:70.35px;top:219.85px;background:#ffc6b2"></i><i style="left:83.66px;top:219.85px;background:#ffc6d6"></i><i style="left:96.97px;top:219.85px;background:#ffc6fa"></i><i style="left:110.28px;top:219.85px;background:#ffe700"></i><i style="left:123.59px;top:219.85px;background:#ffe724"></i><i style="left:136.90px;top:219.85px;background:#ffe747"></i><i style="left:150.21px;top:219.85px;background:#ffe76b"></i><i style="left:163.52px;top:219.85px;background:#ffe78f"></i><i style="left:176.83px;top:219.85px;background:#ffe7b2"></i><i style="left:190.14px;top:219.85px;background:#ffe7d6"></i><i style="left:203.45px;top:219.85px;background:#ffe7fa"></i></div>
</div>
<div class="win" style="left:9.5px;top:262.0px;width:356.5px;height:291.8px;border-radius:4px;border-color:#8a7b4d">
<div class="tb tbi" style="height:15.5px;border-bottom:1px solid #9d8f66"></div>
<div class="tri" style="left:4.27px;top:4.60px;border-width:8.21px 5.13px 0 5.13px"></div>
<div class="t" style="left:20.10px;top:0.50px;font-size:11.00px;line-height:15.40px;letter-spacing:0.03px;">Просмотр памяти</div>
<div class="abs" style="left:346.50px;top:17.00px;width:6.5px;bottom:2px;background:#e4d6b8"></div>
<div class="abs" style="left:45.70px;top:50.00px;width:15.3px;height:240.00px;background:#dcc8c1"></div>
<div class="abs" style="left:63.97px;top:50.00px;width:15.3px;height:240.00px;background:#dcc8c1"></div>
<div class="abs" style="left:82.24px;top:50.00px;width:15.3px;height:240.00px;background:#dcc8c1"></div>
<div class="abs" style="left:100.51px;top:50.00px;width:15.3px;height:240.00px;background:#dcc8c1"></div>
<div class="abs" style="left:118.78px;top:50.00px;width:15.3px;height:240.00px;background:#dcc8c1"></div>
<div class="abs" style="left:137.05px;top:50.00px;width:15.3px;height:240.00px;background:#dcc8c1"></div>
<div class="abs" style="left:155.32px;top:50.00px;width:15.3px;height:240.00px;background:#dcc8c1"></div>
<div class="abs" style="left:173.59px;top:50.00px;width:15.3px;height:240.00px;background:#dcc8c1"></div>
<div class="abs" style="left:196.50px;top:50.00px;width:15.3px;height:240.00px;background:#dcc8c1"></div>
<div class="abs" style="left:214.85px;top:50.00px;width:15.3px;height:240.00px;background:#dcc8c1"></div>
<div class="abs" style="left:233.20px;top:50.00px;width:15.3px;height:240.00px;background:#dcc8c1"></div>
<div class="abs" style="left:251.55px;top:50.00px;width:15.3px;height:240.00px;background:#dcc8c1"></div>
<div class="abs" style="left:269.90px;top:50.00px;width:15.3px;height:240.00px;background:#dcc8c1"></div>
<div class="abs" style="left:288.25px;top:50.00px;width:15.3px;height:240.00px;background:#dcc8c1"></div>
<div class="abs" style="left:306.60px;top:50.00px;width:15.3px;height:240.00px;background:#dcc8c1"></div>
<div class="abs" style="left:324.95px;top:50.00px;width:15.3px;height:240.00px;background:#dcc8c1"></div>
<div class="t" style="left:2.90px;top:21.48px;font-size:10.60px;line-height:14.84px;letter-spacing:-0.08px;">0000:</div>
<div class="abs" style="left:45.70px;top:21.60px;width:15.3px;height:14.7px;background:#dcc8c1"></div><div class="t" style="left:47.10px;top:21.48px;font-size:10.60px;line-height:14.84px;color:#d2691e;letter-spacing:-0.28px;">C3</div><div class="t" style="left:65.37px;top:21.48px;font-size:10.60px;line-height:14.84px;color:#2e1a10;letter-spacing:-0.28px;">8E</div><div class="abs" style="left:82.24px;top:21.60px;width:15.3px;height:14.7px;background:#dcc8c1"></div><div class="t" style="left:83.64px;top:21.48px;font-size:10.60px;line-height:14.84px;color:#8b7b68;letter-spacing:-0.28px;">00</div><div class="t" style="left:101.91px;top:21.48px;font-size:10.60px;line-height:14.84px;color:#857560;letter-spacing:-0.28px;">01</div><div class="t" style="left:120.18px;top:21.48px;font-size:10.60px;line-height:14.84px;color:#857560;letter-spacing:-0.28px;">0C</div><div class="t" style="left:138.45px;top:21.48px;font-size:10.60px;line-height:14.84px;color:#857560;letter-spacing:-0.28px;">24</div><div class="t" style="left:156.72px;top:21.48px;font-size:10.60px;line-height:14.84px;color:#8b7b68;letter-spacing:-0.28px;">00</div><div class="t" style="left:174.99px;top:21.48px;font-size:10.60px;line-height:14.84px;color:#8b7b68;letter-spacing:-0.28px;">00</div><div class="t" style="left:197.90px;top:21.48px;font-size:10.60px;line-height:14.84px;color:#8b7b68;letter-spacing:-0.28px;">00</div><div class="t" style="left:216.25px;top:21.48px;font-size:10.60px;line-height:14.84px;color:#8b7b68;letter-spacing:-0.28px;">00</div><div class="t" style="left:234.60px;top:21.48px;font-size:10.60px;line-height:14.84px;color:#8b7b68;letter-spacing:-0.28px;">00</div><div class="t" style="left:252.95px;top:21.48px;font-size:10.60px;line-height:14.84px;color:#8b7b68;letter-spacing:-0.28px;">00</div><div class="t" style="left:271.30px;top:21.48px;font-size:10.60px;line-height:14.84px;color:#8b7b68;letter-spacing:-0.28px;">00</div><div class="t" style="left:289.65px;top:21.48px;font-size:10.60px;line-height:14.84px;color:#8b7b68;letter-spacing:-0.28px;">00</div><div class="t" style="left:308.00px;top:21.48px;font-size:10.60px;line-height:14.84px;color:#8b7b68;letter-spacing:-0.28px;">00</div><div class="t" style="left:326.35px;top:21.48px;font-size:10.60px;line-height:14.84px;color:#8b7b68;letter-spacing:-0.28px;">00</div>
<div class="t" style="left:2.90px;top:36.18px;font-size:10.60px;line-height:14.84px;letter-spacing:-0.08px;">0010:</div>
<div class="t" style="left:47.10px;top:36.18px;font-size:10.60px;line-height:14.84px;color:#8b7b68;letter-spacing:-0.28px;">00</div><div class="t" style="left:65.37px;top:36.18px;font-size:10.60px;line-height:14.84px;color:#8b7b68;letter-spacing:-0.28px;">00</div><div class="t" style="left:83.64px;top:36.18px;font-size:10.60px;line-height:14.84px;color:#8b7b68;letter-spacing:-0.28px;">00</div><div class="t" style="left:101.91px;top:36.18px;font-size:10.60px;line-height:14.84px;color:#8b7b68;letter-spacing:-0.28px;">00</div><div class="t" style="left:120.18px;top:36.18px;font-size:10.60px;line-height:14.84px;color:#8b7b68;letter-spacing:-0.28px;">00</div><div class="t" style="left:138.45px;top:36.18px;font-size:10.60px;line-height:14.84px;color:#8b7b68;letter-spacing:-0.28px;">00</div><div class="t" style="left:156.72px;top:36.18px;font-size:10.60px;line-height:14.84px;color:#8b7b68;letter-spacing:-0.28px;">00</div><div class="t" style="left:174.99px;top:36.18px;font-size:10.60px;line-height:14.84px;color:#8b7b68;letter-spacing:-0.28px;">00</div><div class="t" style="left:197.90px;top:36.18px;font-size:10.60px;line-height:14.84px;color:#8b7b68;letter-spacing:-0.28px;">00</div><div class="t" style="left:216.25px;top:36.18px;font-size:10.60px;line-height:14.84px;color:#8b7b68;letter-spacing:-0.28px;">00</div><div class="t" style="left:234.60px;top:36.18px;font-size:10.60px;line-height:14.84px;color:#8b7b68;letter-spacing:-0.28px;">00</div><div class="t" style="left:252.95px;top:36.18px;font-size:10.60px;line-height:14.84px;color:#8b7b68;letter-spacing:-0.28px;">00</div><div class="t" style="left:271.30px;top:36.18px;font-size:10.60px;line-height:14.84px;color:#8b7b68;letter-spacing:-0.28px;">00</div><div class="t" style="left:289.65px;top:36.18px;font-size:10.60px;line-height:14.84px;color:#8b7b68;letter-spacing:-0.28px;">00</div><div class="t" style="left:308.00px;top:36.18px;font-size:10.60px;line-height:14.84px;color:#8b7b68;letter-spacing:-0.28px;">00</div><div class="t" style="left:326.35px;top:36.18px;font-size:10.60px;line-height:14.84px;color:#8b7b68;letter-spacing:-0.28px;">00</div>
<div class="t" style="left:2.90px;top:50.88px;font-size:10.60px;line-height:14.84px;letter-spacing:-0.08px;">0020:</div>
<div class="t" style="left:47.10px;top:50.88px;font-size:10.60px;line-height:14.84px;color:#2e1a10;letter-spacing:-0.28px;">09</div><div class="t" style="left:65.37px;top:50.88px;font-size:10.60px;line-height:14.84px;color:#2f9e40;letter-spacing:-0.28px;">32</div><div class="t" style="left:83.64px;top:50.88px;font-size:10.60px;line-height:14.84px;color:#2e1a10;letter-spacing:-0.28px;">04</div><div class="t" style="left:101.91px;top:50.88px;font-size:10.60px;line-height:14.84px;color:#8b7b68;letter-spacing:-0.28px;">00</div><div class="t" style="left:120.18px;top:50.88px;font-size:10.60px;line-height:14.84px;color:#2f9e40;letter-spacing:-0.28px;">3E</div><div class="t" style="left:138.45px;top:50.88px;font-size:10.60px;line-height:14.84px;color:#2e1a10;letter-spacing:-0.28px;">3F</div><div class="t" style="left:156.72px;top:50.88px;font-size:10.60px;line-height:14.84px;color:#2f9e40;letter-spacing:-0.28px;">32</div><div class="t" style="left:174.99px;top:50.88px;font-size:10.60px;line-height:14.84px;color:#2e1a10;letter-spacing:-0.28px;">05</div><div class="t" style="left:197.90px;top:50.88px;font-size:10.60px;line-height:14.84px;color:#8b7b68;letter-spacing:-0.28px;">00</div><div class="t" style="left:216.25px;top:50.88px;font-size:10.60px;line-height:14.84px;color:#2f9e40;letter-spacing:-0.28px;">3E</div><div class="t" style="left:234.60px;top:50.88px;font-size:10.60px;line-height:14.84px;color:#2e1a10;letter-spacing:-0.28px;">01</div><div class="t" style="left:252.95px;top:50.88px;font-size:10.60px;line-height:14.84px;color:#2f9e40;letter-spacing:-0.28px;">32</div><div class="t" style="left:271.30px;top:50.88px;font-size:10.60px;line-height:14.84px;color:#2e1a10;letter-spacing:-0.28px;">06</div><div class="t" style="left:289.65px;top:50.88px;font-size:10.60px;line-height:14.84px;color:#8b7b68;letter-spacing:-0.28px;">00</div><div class="t" style="left:308.00px;top:50.88px;font-size:10.60px;line-height:14.84px;color:#2f9e40;letter-spacing:-0.28px;">3E</div><div class="t" style="left:326.35px;top:50.88px;font-size:10.60px;line-height:14.84px;color:#2e1a10;letter-spacing:-0.28px;">09</div>
<div class="t" style="left:2.90px;top:65.58px;font-size:10.60px;line-height:14.84px;letter-spacing:-0.08px;">0030:</div>
<div class="t" style="left:47.10px;top:65.58px;font-size:10.60px;line-height:14.84px;color:#2f9e40;letter-spacing:-0.28px;">32</div><div class="t" style="left:65.37px;top:65.58px;font-size:10.60px;line-height:14.84px;color:#2e1a10;letter-spacing:-0.28px;">07</div><div class="t" style="left:83.64px;top:65.58px;font-size:10.60px;line-height:14.84px;color:#8b7b68;letter-spacing:-0.28px;">00</div><div class="t" style="left:101.91px;top:65.58px;font-size:10.60px;line-height:14.84px;color:#2f9e40;letter-spacing:-0.28px;">3E</div><div class="t" style="left:120.18px;top:65.58px;font-size:10.60px;line-height:14.84px;color:#2e1a10;letter-spacing:-0.28px;">10</div><div class="t" style="left:138.45px;top:65.58px;font-size:10.60px;line-height:14.84px;color:#2f9e40;letter-spacing:-0.28px;">32</div><div class="t" style="left:156.72px;top:65.58px;font-size:10.60px;line-height:14.84px;color:#2e1a10;letter-spacing:-0.28px;">08</div><div class="t" style="left:174.99px;top:65.58px;font-size:10.60px;line-height:14.84px;color:#8b7b68;letter-spacing:-0.28px;">00</div><div class="t" style="left:197.90px;top:65.58px;font-size:10.60px;line-height:14.84px;color:#2f9e40;letter-spacing:-0.28px;">3E</div><div class="t" style="left:216.25px;top:65.58px;font-size:10.60px;line-height:14.84px;color:#8b7b68;letter-spacing:-0.28px;">00</div><div class="t" style="left:234.60px;top:65.58px;font-size:10.60px;line-height:14.84px;color:#2f9e40;letter-spacing:-0.28px;">32</div><div class="t" style="left:252.95px;top:65.58px;font-size:10.60px;line-height:14.84px;color:#2e1a10;letter-spacing:-0.28px;">09</div><div class="t" style="left:271.30px;top:65.58px;font-size:10.60px;line-height:14.84px;color:#8b7b68;letter-spacing:-0.28px;">00</div><div class="t" style="left:289.65px;top:65.58px;font-size:10.60px;line-height:14.84px;color:#2f9e40;letter-spacing:-0.28px;">3E</div><div class="t" style="left:308.00px;top:65.58px;font-size:10.60px;line-height:14.84px;color:#8b7b68;letter-spacing:-0.28px;">00</div><div class="t" style="left:326.35px;top:65.58px;font-size:10.60px;line-height:14.84px;color:#2f9e40;letter-spacing:-0.28px;">32</div>
<div class="t" style="left:2.90px;top:80.28px;font-size:10.60px;line-height:14.84px;letter-spacing:-0.08px;">0040:</div>
<div class="t" style="left:47.10px;top:80.28px;font-size:10.60px;line-height:14.84px;color:#2e1a10;letter-spacing:-0.28px;">0A</div><div class="t" style="left:65.37px;top:80.28px;font-size:10.60px;line-height:14.84px;color:#8b7b68;letter-spacing:-0.28px;">00</div><div class="t" style="left:83.64px;top:80.28px;font-size:10.60px;line-height:14.84px;color:#2f9e40;letter-spacing:-0.28px;">3E</div><div class="t" style="left:101.91px;top:80.28px;font-size:10.60px;line-height:14.84px;color:#8b7b68;letter-spacing:-0.28px;">00</div><div class="t" style="left:120.18px;top:80.28px;font-size:10.60px;line-height:14.84px;color:#2f9e40;letter-spacing:-0.28px;">32</div><div class="t" style="left:138.45px;top:80.28px;font-size:10.60px;line-height:14.84px;color:#2e1a10;letter-spacing:-0.28px;">0B</div><div class="t" style="left:156.72px;top:80.28px;font-size:10.60px;line-height:14.84px;color:#8b7b68;letter-spacing:-0.28px;">00</div><div class="t" style="left:174.99px;top:80.28px;font-size:10.60px;line-height:14.84px;color:#2f9e40;letter-spacing:-0.28px;">3E</div><div class="t" style="left:197.90px;top:80.28px;font-size:10.60px;line-height:14.84px;color:#8b7b68;letter-spacing:-0.28px;">00</div><div class="t" style="left:216.25px;top:80.28px;font-size:10.60px;line-height:14.84px;color:#2f9e40;letter-spacing:-0.28px;">32</div><div class="t" style="left:234.60px;top:80.28px;font-size:10.60px;line-height:14.84px;color:#2e1a10;letter-spacing:-0.28px;">0C</div><div class="t" style="left:252.95px;top:80.28px;font-size:10.60px;line-height:14.84px;color:#8b7b68;letter-spacing:-0.28px;">00</div><div class="t" style="left:271.30px;top:80.28px;font-size:10.60px;line-height:14.84px;color:#2f9e40;letter-spacing:-0.28px;">3E</div><div class="t" style="left:289.65px;top:80.28px;font-size:10.60px;line-height:14.84px;color:#8b7b68;letter-spacing:-0.28px;">00</div><div class="t" style="left:308.00px;top:80.28px;font-size:10.60px;line-height:14.84px;color:#2f9e40;letter-spacing:-0.28px;">32</div><div class="t" style="left:326.35px;top:80.28px;font-size:10.60px;line-height:14.84px;color:#2e1a10;letter-spacing:-0.28px;">0D</div>
<div class="t" style="left:2.90px;top:94.98px;font-size:10.60px;line-height:14.84px;letter-spacing:-0.08px;">0050:</div>
<div class="t" style="left:47.10px;top:94.98px;font-size:10.60px;line-height:14.84px;color:#8b7b68;letter-spacing:-0.28px;">00</div><div class="t" style="left:65.37px;top:94.98px;font-size:10.60px;line-height:14.84px;color:#2f9e40;letter-spacing:-0.28px;">3E</div><div class="t" style="left:83.64px;top:94.98px;font-size:10.60px;line-height:14.84px;color:#8b7b68;letter-spacing:-0.28px;">00</div><div class="t" style="left:101.91px;top:94.98px;font-size:10.60px;line-height:14.84px;color:#2f9e40;letter-spacing:-0.28px;">32</div><div class="t" style="left:120.18px;top:94.98px;font-size:10.60px;line-height:14.84px;color:#2e1a10;letter-spacing:-0.28px;">0E</div><div class="t" style="left:138.45px;top:94.98px;font-size:10.60px;line-height:14.84px;color:#8b7b68;letter-spacing:-0.28px;">00</div><div class="t" style="left:156.72px;top:94.98px;font-size:10.60px;line-height:14.84px;color:#2f9e40;letter-spacing:-0.28px;">3E</div><div class="t" style="left:174.99px;top:94.98px;font-size:10.60px;line-height:14.84px;color:#8b7b68;letter-spacing:-0.28px;">00</div><div class="t" style="left:197.90px;top:94.98px;font-size:10.60px;line-height:14.84px;color:#2f9e40;letter-spacing:-0.28px;">32</div><div class="t" style="left:216.25px;top:94.98px;font-size:10.60px;line-height:14.84px;color:#2e1a10;letter-spacing:-0.28px;">0F</div><div class="t" style="left:234.60px;top:94.98px;font-size:10.60px;line-height:14.84px;color:#8b7b68;letter-spacing:-0.28px;">00</div><div class="t" style="left:252.95px;top:94.98px;font-size:10.60px;line-height:14.84px;color:#e0201e;letter-spacing:-0.28px;">C9</div><div class="t" style="left:271.30px;top:94.98px;font-size:10.60px;line-height:14.84px;color:#8b7b68;letter-spacing:-0.28px;">00</div><div class="t" style="left:289.65px;top:94.98px;font-size:10.60px;line-height:14.84px;color:#8b7b68;letter-spacing:-0.28px;">00</div><div class="t" style="left:308.00px;top:94.98px;font-size:10.60px;line-height:14.84px;color:#8b7b68;letter-spacing:-0.28px;">00</div><div class="t" style="left:326.35px;top:94.98px;font-size:10.60px;line-height:14.84px;color:#8b7b68;letter-spacing:-0.28px;">00</div>
<div class="t" style="left:2.90px;top:109.68px;font-size:10.60px;line-height:14.84px;letter-spacing:-0.08px;">0060:</div>
<div class="t" style="left:47.10px;top:109.68px;font-size:10.60px;line-height:14.84px;color:#e0201e;letter-spacing:-0.28px;">C9</div><div class="t" style="left:65.37px;top:109.68px;font-size:10.60px;line-height:14.84px;color:#2f9e40;letter-spacing:-0.28px;">3E</div><div class="t" style="left:83.64px;top:109.68px;font-size:10.60px;line-height:14.84px;color:#2e1a10;letter-spacing:-0.28px;">04</div><div class="t" style="left:101.91px;top:109.68px;font-size:10.60px;line-height:14.84px;color:#2f9e40;letter-spacing:-0.28px;">32</div><div class="t" style="left:120.18px;top:109.68px;font-size:10.60px;line-height:14.84px;color:#2e1a10;letter-spacing:-0.28px;">05</div><div class="t" style="left:138.45px;top:109.68px;font-size:10.60px;line-height:14.84px;color:#8b7b68;letter-spacing:-0.28px;">00</div><div class="t" style="left:156.72px;top:109.68px;font-size:10.60px;line-height:14.84px;color:#2f9e40;letter-spacing:-0.28px;">26</div><div class="t" style="left:174.99px;top:109.68px;font-size:10.60px;line-height:14.84px;color:#2e1a10;letter-spacing:-0.28px;">20</div><div class="t" style="left:197.90px;top:109.68px;font-size:10.60px;line-height:14.84px;color:#2f9e40;letter-spacing:-0.28px;">2E</div><div class="t" style="left:216.25px;top:109.68px;font-size:10.60px;line-height:14.84px;color:#c0506a;letter-spacing:-0.28px;">91</div><div class="t" style="left:234.60px;top:109.68px;font-size:10.60px;line-height:14.84px;color:#2f9e40;letter-spacing:-0.28px;">46</div><div class="t" style="left:252.95px;top:109.68px;font-size:10.60px;line-height:14.84px;color:#2f9e40;letter-spacing:-0.28px;">23</div><div class="t" style="left:271.30px;top:109.68px;font-size:10.60px;line-height:14.84px;color:#2f9e40;letter-spacing:-0.28px;">4E</div><div class="t" style="left:289.65px;top:109.68px;font-size:10.60px;line-height:14.84px;color:#2f9e40;letter-spacing:-0.28px;">23</div><div class="t" style="left:308.00px;top:109.68px;font-size:10.60px;line-height:14.84px;color:#2f9e40;letter-spacing:-0.28px;">7E</div><div class="t" style="left:326.35px;top:109.68px;font-size:10.60px;line-height:14.84px;color:#2f9e40;letter-spacing:-0.28px;">32</div>
<div class="t" style="left:2.90px;top:124.38px;font-size:10.60px;line-height:14.84px;letter-spacing:-0.08px;">0070:</div>
<div class="t" style="left:47.10px;top:124.38px;font-size:10.60px;line-height:14.84px;color:#2f9e40;letter-spacing:-0.28px;">23</div><div class="t" style="left:65.37px;top:124.38px;font-size:10.60px;line-height:14.84px;color:#2f9e40;letter-spacing:-0.28px;">7E</div><div class="t" style="left:83.64px;top:124.38px;font-size:10.60px;line-height:14.84px;color:#2f9e40;letter-spacing:-0.28px;">32</div><div class="t" style="left:101.91px;top:124.38px;font-size:10.60px;line-height:14.84px;color:#2e1a10;letter-spacing:-0.28px;">04</div><div class="t" style="left:120.18px;top:124.38px;font-size:10.60px;line-height:14.84px;color:#8b7b68;letter-spacing:-0.28px;">00</div><div class="t" style="left:138.45px;top:124.38px;font-size:10.60px;line-height:14.84px;color:#2f9e40;letter-spacing:-0.28px;">23</div><div class="t" style="left:156.72px;top:124.38px;font-size:10.60px;line-height:14.84px;color:#2f9e40;letter-spacing:-0.28px;">7E</div><div class="t" style="left:174.99px;top:124.38px;font-size:10.60px;line-height:14.84px;color:#2f9e40;letter-spacing:-0.28px;">32</div><div class="t" style="left:197.90px;top:124.38px;font-size:10.60px;line-height:14.84px;color:#2e1a10;letter-spacing:-0.28px;">06</div><div class="t" style="left:216.25px;top:124.38px;font-size:10.60px;line-height:14.84px;color:#8b7b68;letter-spacing:-0.28px;">00</div><div class="t" style="left:234.60px;top:124.38px;font-size:10.60px;line-height:14.84px;color:#2f9e40;letter-spacing:-0.28px;">23</div><div class="t" style="left:252.95px;top:124.38px;font-size:10.60px;line-height:14.84px;color:#2b93dc;letter-spacing:-0.28px;">CD</div><div class="t" style="left:271.30px;top:124.38px;font-size:10.60px;line-height:14.84px;color:#2e1a10;letter-spacing:-0.28px;">40</div><div class="t" style="left:289.65px;top:124.38px;font-size:10.60px;line-height:14.84px;color:#2e1a10;letter-spacing:-0.28px;">04</div><div class="t" style="left:308.00px;top:124.38px;font-size:10.60px;line-height:14.84px;color:#2b93dc;letter-spacing:-0.28px;">CD</div><div class="t" style="left:326.35px;top:124.38px;font-size:10.60px;line-height:14.84px;color:#2e1a10;letter-spacing:-0.28px;">48</div>
<div class="t" style="left:2.90px;top:139.08px;font-size:10.60px;line-height:14.84px;letter-spacing:-0.08px;">0080:</div>
<div class="t" style="left:47.10px;top:139.08px;font-size:10.60px;line-height:14.84px;color:#d38a8a;letter-spacing:-0.28px;">05</div><div class="t" style="left:65.37px;top:139.08px;font-size:10.60px;line-height:14.84px;color:#d2691e;letter-spacing:-0.28px;">CA</div><div class="t" style="left:83.64px;top:139.08px;font-size:10.60px;line-height:14.84px;color:#2e1a10;letter-spacing:-0.28px;">87</div><div class="t" style="left:101.91px;top:139.08px;font-size:10.60px;line-height:14.84px;color:#8b7b68;letter-spacing:-0.28px;">00</div><div class="t" style="left:120.18px;top:139.08px;font-size:10.60px;line-height:14.84px;color:#d2691e;letter-spacing:-0.28px;">C3</div><div class="t" style="left:138.45px;top:139.08px;font-size:10.60px;line-height:14.84px;color:#2e1a10;letter-spacing:-0.28px;">6C</div><div class="t" style="left:156.72px;top:139.08px;font-size:10.60px;line-height:14.84px;color:#8b7b68;letter-spacing:-0.28px;">00</div><div class="t" style="left:174.99px;top:139.08px;font-size:10.60px;line-height:14.84px;color:#2b93dc;letter-spacing:-0.28px;">CD</div><div class="t" style="left:197.90px;top:139.08px;font-size:10.60px;line-height:14.84px;color:#2e1a10;letter-spacing:-0.28px;">0C</div><div class="t" style="left:216.25px;top:139.08px;font-size:10.60px;line-height:14.84px;color:#2e1a10;letter-spacing:-0.28px;">02</div><div class="t" style="left:234.60px;top:139.08px;font-size:10.60px;line-height:14.84px;color:#2b93dc;letter-spacing:-0.28px;">CD</div><div class="t" style="left:252.95px;top:139.08px;font-size:10.60px;line-height:14.84px;color:#2e1a10;letter-spacing:-0.28px;">E1</div><div class="t" style="left:271.30px;top:139.08px;font-size:10.60px;line-height:14.84px;color:#2e1a10;letter-spacing:-0.28px;">02</div><div class="t" style="left:289.65px;top:139.08px;font-size:10.60px;line-height:14.84px;color:#2f9e40;letter-spacing:-0.28px;">3E</div><div class="t" style="left:308.00px;top:139.08px;font-size:10.60px;line-height:14.84px;color:#8b7b68;letter-spacing:-0.28px;">00</div><div class="t" style="left:326.35px;top:139.08px;font-size:10.60px;line-height:14.84px;color:#2f9e40;letter-spacing:-0.28px;">32</div>
<div class="t" style="left:2.90px;top:153.78px;font-size:10.60px;line-height:14.84px;letter-spacing:-0.08px;">0090:</div>
<div class="t" style="left:47.10px;top:153.78px;font-size:10.60px;line-height:14.84px;color:#8b7b68;letter-spacing:-0.28px;">00</div><div class="t" style="left:65.37px;top:153.78px;font-size:10.60px;line-height:14.84px;color:#2b93dc;letter-spacing:-0.28px;">CD</div><div class="t" style="left:83.64px;top:153.78px;font-size:10.60px;line-height:14.84px;color:#2e1a10;letter-spacing:-0.28px;">1A</div><div class="t" style="left:101.91px;top:153.78px;font-size:10.60px;line-height:14.84px;color:#8b7b68;letter-spacing:-0.28px;">00</div><div class="t" style="left:120.18px;top:153.78px;font-size:10.60px;line-height:14.84px;color:#2b93dc;letter-spacing:-0.28px;">CD</div><div class="t" style="left:138.45px;top:153.78px;font-size:10.60px;line-height:14.84px;color:#2e1a10;letter-spacing:-0.28px;">17</div><div class="t" style="left:156.72px;top:153.78px;font-size:10.60px;line-height:14.84px;color:#2e1a10;letter-spacing:-0.28px;">04</div><div class="t" style="left:174.99px;top:153.78px;font-size:10.60px;line-height:14.84px;color:#2b93dc;letter-spacing:-0.28px;">CD</div><div class="t" style="left:197.90px;top:153.78px;font-size:10.60px;line-height:14.84px;color:#2e1a10;letter-spacing:-0.28px;">35</div><div class="t" style="left:216.25px;top:153.78px;font-size:10.60px;line-height:14.84px;color:#2e1a10;letter-spacing:-0.28px;">02</div><div class="t" style="left:234.60px;top:153.78px;font-size:10.60px;line-height:14.84px;color:#2f9e40;letter-spacing:-0.28px;">3E</div><div class="t" style="left:252.95px;top:153.78px;font-size:10.60px;line-height:14.84px;color:#8b7b68;letter-spacing:-0.28px;">00</div><div class="t" style="left:271.30px;top:153.78px;font-size:10.60px;line-height:14.84px;color:#2f9e40;letter-spacing:-0.28px;">32</div><div class="t" style="left:289.65px;top:153.78px;font-size:10.60px;line-height:14.84px;color:#2e1a10;letter-spacing:-0.28px;">05</div><div class="t" style="left:308.00px;top:153.78px;font-size:10.60px;line-height:14.84px;color:#8b7b68;letter-spacing:-0.28px;">00</div><div class="t" style="left:326.35px;top:153.78px;font-size:10.60px;line-height:14.84px;color:#2b93dc;letter-spacing:-0.28px;">CD</div>
<div class="t" style="left:2.90px;top:168.48px;font-size:10.60px;line-height:14.84px;letter-spacing:-0.08px;">00A0:</div>
<div class="t" style="left:47.10px;top:168.48px;font-size:10.60px;line-height:14.84px;color:#2e1a10;letter-spacing:-0.28px;">D2</div><div class="t" style="left:65.37px;top:168.48px;font-size:10.60px;line-height:14.84px;color:#8b7b68;letter-spacing:-0.28px;">00</div><div class="t" style="left:83.64px;top:168.48px;font-size:10.60px;line-height:14.84px;color:#2b93dc;letter-spacing:-0.28px;">CD</div><div class="t" style="left:101.91px;top:168.48px;font-size:10.60px;line-height:14.84px;color:#2e1a10;letter-spacing:-0.28px;">40</div><div class="t" style="left:120.18px;top:168.48px;font-size:10.60px;line-height:14.84px;color:#2e1a10;letter-spacing:-0.28px;">04</div><div class="t" style="left:138.45px;top:168.48px;font-size:10.60px;line-height:14.84px;color:#2b93dc;letter-spacing:-0.28px;">CD</div><div class="t" style="left:156.72px;top:168.48px;font-size:10.60px;line-height:14.84px;color:#2e1a10;letter-spacing:-0.28px;">48</div><div class="t" style="left:174.99px;top:168.48px;font-size:10.60px;line-height:14.84px;color:#2e1a10;letter-spacing:-0.28px;">02</div><div class="t" style="left:197.90px;top:168.48px;font-size:10.60px;line-height:14.84px;color:#2b93dc;letter-spacing:-0.28px;">CD</div><div class="t" style="left:216.25px;top:168.48px;font-size:10.60px;line-height:14.84px;color:#2e1a10;letter-spacing:-0.28px;">A3</div><div class="t" style="left:234.60px;top:168.48px;font-size:10.60px;line-height:14.84px;color:#2e1a10;letter-spacing:-0.28px;">03</div><div class="t" style="left:252.95px;top:168.48px;font-size:10.60px;line-height:14.84px;color:#2b93dc;letter-spacing:-0.28px;">CD</div><div class="t" style="left:271.30px;top:168.48px;font-size:10.60px;line-height:14.84px;color:#2e1a10;letter-spacing:-0.28px;">B3</div><div class="t" style="left:289.65px;top:168.48px;font-size:10.60px;line-height:14.84px;color:#2e1a10;letter-spacing:-0.28px;">02</div><div class="t" style="left:308.00px;top:168.48px;font-size:10.60px;line-height:14.84px;color:#2f9e40;letter-spacing:-0.28px;">3E</div><div class="t" style="left:326.35px;top:168.48px;font-size:10.60px;line-height:14.84px;color:#2e1a10;letter-spacing:-0.28px;">12</div>
<div class="t" style="left:2.90px;top:183.18px;font-size:10.60px;line-height:14.84px;letter-spacing:-0.08px;">00B0:</div>
<div class="t" style="left:47.10px;top:183.18px;font-size:10.60px;line-height:14.84px;color:#2f9e40;letter-spacing:-0.28px;">32</div><div class="t" style="left:65.37px;top:183.18px;font-size:10.60px;line-height:14.84px;color:#2e1a10;letter-spacing:-0.28px;">05</div><div class="t" style="left:83.64px;top:183.18px;font-size:10.60px;line-height:14.84px;color:#8b7b68;letter-spacing:-0.28px;">00</div><div class="t" style="left:101.91px;top:183.18px;font-size:10.60px;line-height:14.84px;color:#2b93dc;letter-spacing:-0.28px;">CD</div><div class="t" style="left:120.18px;top:183.18px;font-size:10.60px;line-height:14.84px;color:#2e1a10;letter-spacing:-0.28px;">40</div><div class="t" style="left:138.45px;top:183.18px;font-size:10.60px;line-height:14.84px;color:#2e1a10;letter-spacing:-0.28px;">04</div><div class="t" style="left:156.72px;top:183.18px;font-size:10.60px;line-height:14.84px;color:#2f9e40;letter-spacing:-0.28px;">3E</div><div class="t" style="left:174.99px;top:183.18px;font-size:10.60px;line-height:14.84px;color:#2e1a10;letter-spacing:-0.28px;">3F</div><div class="t" style="left:197.90px;top:183.18px;font-size:10.60px;line-height:14.84px;color:#2f9e40;letter-spacing:-0.28px;">32</div><div class="t" style="left:216.25px;top:183.18px;font-size:10.60px;line-height:14.84px;color:#2e1a10;letter-spacing:-0.28px;">05</div><div class="t" style="left:234.60px;top:183.18px;font-size:10.60px;line-height:14.84px;color:#8b7b68;letter-spacing:-0.28px;">00</div><div class="t" style="left:252.95px;top:183.18px;font-size:10.60px;line-height:14.84px;color:#2b93dc;letter-spacing:-0.28px;">CD</div><div class="t" style="left:271.30px;top:183.18px;font-size:10.60px;line-height:14.84px;color:#2e1a10;letter-spacing:-0.28px;">40</div><div class="t" style="left:289.65px;top:183.18px;font-size:10.60px;line-height:14.84px;color:#2e1a10;letter-spacing:-0.28px;">04</div><div class="t" style="left:308.00px;top:183.18px;font-size:10.60px;line-height:14.84px;color:#2b93dc;letter-spacing:-0.28px;">CD</div><div class="t" style="left:326.35px;top:183.18px;font-size:10.60px;line-height:14.84px;color:#2e1a10;letter-spacing:-0.28px;">48</div>
<div class="t" style="left:2.90px;top:197.88px;font-size:10.60px;line-height:14.84px;letter-spacing:-0.08px;">00C0:</div>
<div class="t" style="left:47.10px;top:197.88px;font-size:10.60px;line-height:14.84px;color:#2e1a10;letter-spacing:-0.28px;">02</div><div class="t" style="left:65.37px;top:197.88px;font-size:10.60px;line-height:14.84px;color:#2f9e40;letter-spacing:-0.28px;">3A</div><div class="t" style="left:83.64px;top:197.88px;font-size:10.60px;line-height:14.84px;color:#2e1a10;letter-spacing:-0.28px;">0F</div><div class="t" style="left:101.91px;top:197.88px;font-size:10.60px;line-height:14.84px;color:#8b7b68;letter-spacing:-0.28px;">00</div><div class="t" style="left:120.18px;top:197.88px;font-size:10.60px;line-height:14.84px;color:#7fb4b4;letter-spacing:-0.28px;">FE</div><div class="t" style="left:138.45px;top:197.88px;font-size:10.60px;line-height:14.84px;color:#2e1a10;letter-spacing:-0.28px;">01</div><div class="t" style="left:156.72px;top:197.88px;font-size:10.60px;line-height:14.84px;color:#d2691e;letter-spacing:-0.28px;">CA</div><div class="t" style="left:174.99px;top:197.88px;font-size:10.60px;line-height:14.84px;color:#2e1a10;letter-spacing:-0.28px;">74</div><div class="t" style="left:197.90px;top:197.88px;font-size:10.60px;line-height:14.84px;color:#2e1a10;letter-spacing:-0.28px;">01</div><div class="t" style="left:216.25px;top:197.88px;font-size:10.60px;line-height:14.84px;color:#2f9e40;letter-spacing:-0.28px;">06</div><div class="t" style="left:234.60px;top:197.88px;font-size:10.60px;line-height:14.84px;color:#2e1a10;letter-spacing:-0.28px;">01</div><div class="t" style="left:252.95px;top:197.88px;font-size:10.60px;line-height:14.84px;color:#2b93dc;letter-spacing:-0.28px;">CD</div><div class="t" style="left:271.30px;top:197.88px;font-size:10.60px;line-height:14.84px;color:#2e1a10;letter-spacing:-0.28px;">1A</div><div class="t" style="left:289.65px;top:197.88px;font-size:10.60px;line-height:14.84px;color:#8b7b68;letter-spacing:-0.28px;">00</div><div class="t" style="left:308.00px;top:197.88px;font-size:10.60px;line-height:14.84px;color:#d2691e;letter-spacing:-0.28px;">C3</div><div class="t" style="left:326.35px;top:197.88px;font-size:10.60px;line-height:14.84px;color:#2e1a10;letter-spacing:-0.28px;">6C</div>
<div class="t" style="left:2.90px;top:212.58px;font-size:10.60px;line-height:14.84px;letter-spacing:-0.08px;">00D0:</div>
<div class="t" style="left:47.10px;top:212.58px;font-size:10.60px;line-height:14.84px;color:#8b7b68;letter-spacing:-0.28px;">00</div><div class="t" style="left:65.37px;top:212.58px;font-size:10.60px;line-height:14.84px;color:#b694c6;letter-spacing:-0.28px;">76</div><div class="t" style="left:83.64px;top:212.58px;font-size:10.60px;line-height:14.84px;color:#2f9e40;letter-spacing:-0.28px;">3A</div><div class="t" style="left:101.91px;top:212.58px;font-size:10.60px;line-height:14.84px;color:#2e1a10;letter-spacing:-0.28px;">03</div><div class="t" style="left:120.18px;top:212.58px;font-size:10.60px;line-height:14.84px;color:#8b7b68;letter-spacing:-0.28px;">00</div><div class="t" style="left:138.45px;top:212.58px;font-size:10.60px;line-height:14.84px;color:#6a4526;letter-spacing:-0.28px;">D3</div><div class="t" style="left:156.72px;top:212.58px;font-size:10.60px;line-height:14.84px;color:#2e1a10;letter-spacing:-0.28px;">07</div><div class="t" style="left:174.99px;top:212.58px;font-size:10.60px;line-height:14.84px;color:#2f9e40;letter-spacing:-0.28px;">3A</div><div class="t" style="left:197.90px;top:212.58px;font-size:10.60px;line-height:14.84px;color:#2e1a10;letter-spacing:-0.28px;">04</div><div class="t" style="left:216.25px;top:212.58px;font-size:10.60px;line-height:14.84px;color:#8b7b68;letter-spacing:-0.28px;">00</div><div class="t" style="left:234.60px;top:212.58px;font-size:10.60px;line-height:14.84px;color:#6a4526;letter-spacing:-0.28px;">D3</div><div class="t" style="left:252.95px;top:212.58px;font-size:10.60px;line-height:14.84px;color:#2e1a10;letter-spacing:-0.28px;">07</div><div class="t" style="left:271.30px;top:212.58px;font-size:10.60px;line-height:14.84px;color:#2f9e40;letter-spacing:-0.28px;">3A</div><div class="t" style="left:289.65px;top:212.58px;font-size:10.60px;line-height:14.84px;color:#2e1a10;letter-spacing:-0.28px;">05</div><div class="t" style="left:308.00px;top:212.58px;font-size:10.60px;line-height:14.84px;color:#8b7b68;letter-spacing:-0.28px;">00</div><div class="t" style="left:326.35px;top:212.58px;font-size:10.60px;line-height:14.84px;color:#6a4526;letter-spacing:-0.28px;">D3</div>
<div class="t" style="left:2.90px;top:227.28px;font-size:10.60px;line-height:14.84px;letter-spacing:-0.08px;">00E0:</div>
<div class="t" style="left:47.10px;top:227.28px;font-size:10.60px;line-height:14.84px;color:#2f9e40;letter-spacing:-0.28px;">3A</div><div class="t" style="left:65.37px;top:227.28px;font-size:10.60px;line-height:14.84px;color:#2e1a10;letter-spacing:-0.28px;">05</div><div class="t" style="left:83.64px;top:227.28px;font-size:10.60px;line-height:14.84px;color:#8b7b68;letter-spacing:-0.28px;">00</div><div class="t" style="left:101.91px;top:227.28px;font-size:10.60px;line-height:14.84px;color:#6a4526;letter-spacing:-0.28px;">D3</div><div class="t" style="left:120.18px;top:227.28px;font-size:10.60px;line-height:14.84px;color:#2e1a10;letter-spacing:-0.28px;">07</div><div class="t" style="left:138.45px;top:227.28px;font-size:10.60px;line-height:14.84px;color:#2f9e40;letter-spacing:-0.28px;">3A</div><div class="t" style="left:156.72px;top:227.28px;font-size:10.60px;line-height:14.84px;color:#2e1a10;letter-spacing:-0.28px;">06</div><div class="t" style="left:174.99px;top:227.28px;font-size:10.60px;line-height:14.84px;color:#8b7b68;letter-spacing:-0.28px;">00</div><div class="t" style="left:197.90px;top:227.28px;font-size:10.60px;line-height:14.84px;color:#6a4526;letter-spacing:-0.28px;">D3</div><div class="t" style="left:216.25px;top:227.28px;font-size:10.60px;line-height:14.84px;color:#2e1a10;letter-spacing:-0.28px;">07</div><div class="t" style="left:234.60px;top:227.28px;font-size:10.60px;line-height:14.84px;color:#e0201e;letter-spacing:-0.28px;">C9</div><div class="t" style="left:252.95px;top:227.28px;font-size:10.60px;line-height:14.84px;color:#2f9e40;letter-spacing:-0.28px;">3A</div><div class="t" style="left:271.30px;top:227.28px;font-size:10.60px;line-height:14.84px;color:#2e1a10;letter-spacing:-0.28px;">03</div><div class="t" style="left:289.65px;top:227.28px;font-size:10.60px;line-height:14.84px;color:#8b7b68;letter-spacing:-0.28px;">00</div><div class="t" style="left:308.00px;top:227.28px;font-size:10.60px;line-height:14.84px;color:#6a4526;letter-spacing:-0.28px;">D3</div><div class="t" style="left:326.35px;top:227.28px;font-size:10.60px;line-height:14.84px;color:#2e1a10;letter-spacing:-0.28px;">07</div>
<div class="t" style="left:2.90px;top:241.98px;font-size:10.60px;line-height:14.84px;letter-spacing:-0.08px;">00F0:</div>
<div class="t" style="left:47.10px;top:241.98px;font-size:10.60px;line-height:14.84px;color:#2f9e40;letter-spacing:-0.28px;">3A</div><div class="t" style="left:65.37px;top:241.98px;font-size:10.60px;line-height:14.84px;color:#2e1a10;letter-spacing:-0.28px;">04</div><div class="t" style="left:83.64px;top:241.98px;font-size:10.60px;line-height:14.84px;color:#8b7b68;letter-spacing:-0.28px;">00</div><div class="t" style="left:101.91px;top:241.98px;font-size:10.60px;line-height:14.84px;color:#6a4526;letter-spacing:-0.28px;">D3</div><div class="t" style="left:120.18px;top:241.98px;font-size:10.60px;line-height:14.84px;color:#2e1a10;letter-spacing:-0.28px;">07</div><div class="t" style="left:138.45px;top:241.98px;font-size:10.60px;line-height:14.84px;color:#2f9e40;letter-spacing:-0.28px;">3E</div><div class="t" style="left:156.72px;top:241.98px;font-size:10.60px;line-height:14.84px;color:#8b7b68;letter-spacing:-0.28px;">00</div><div class="t" style="left:174.99px;top:241.98px;font-size:10.60px;line-height:14.84px;color:#6a4526;letter-spacing:-0.28px;">D3</div><div class="t" style="left:197.90px;top:241.98px;font-size:10.60px;line-height:14.84px;color:#2e1a10;letter-spacing:-0.28px;">07</div><div class="t" style="left:216.25px;top:241.98px;font-size:10.60px;line-height:14.84px;color:#2f9e40;letter-spacing:-0.28px;">3A</div><div class="t" style="left:234.60px;top:241.98px;font-size:10.60px;line-height:14.84px;color:#2e1a10;letter-spacing:-0.28px;">05</div><div class="t" style="left:252.95px;top:241.98px;font-size:10.60px;line-height:14.84px;color:#8b7b68;letter-spacing:-0.28px;">00</div><div class="t" style="left:271.30px;top:241.98px;font-size:10.60px;line-height:14.84px;color:#6a4526;letter-spacing:-0.28px;">D3</div><div class="t" style="left:289.65px;top:241.98px;font-size:10.60px;line-height:14.84px;color:#2e1a10;letter-spacing:-0.28px;">07</div><div class="t" style="left:308.00px;top:241.98px;font-size:10.60px;line-height:14.84px;color:#e0201e;letter-spacing:-0.28px;">C9</div><div class="t" style="left:326.35px;top:241.98px;font-size:10.60px;line-height:14.84px;color:#8b7b68;letter-spacing:-0.28px;">00</div>
<div class="t" style="left:2.90px;top:256.68px;font-size:10.60px;line-height:14.84px;letter-spacing:-0.08px;">0100:</div>
<div class="t" style="left:47.10px;top:256.68px;font-size:10.60px;line-height:14.84px;color:#8b7b68;letter-spacing:-0.28px;">00</div><div class="t" style="left:65.37px;top:256.68px;font-size:10.60px;line-height:14.84px;color:#6a4526;letter-spacing:-0.28px;">D3</div><div class="t" style="left:83.64px;top:256.68px;font-size:10.60px;line-height:14.84px;color:#2e1a10;letter-spacing:-0.28px;">07</div><div class="t" style="left:101.91px;top:256.68px;font-size:10.60px;line-height:14.84px;color:#e0201e;letter-spacing:-0.28px;">C9</div><div class="t" style="left:120.18px;top:256.68px;font-size:10.60px;line-height:14.84px;color:#2f9e40;letter-spacing:-0.28px;">7D</div><div class="t" style="left:138.45px;top:256.68px;font-size:10.60px;line-height:14.84px;color:#c0506a;letter-spacing:-0.28px;">91</div><div class="t" style="left:156.72px;top:256.68px;font-size:10.60px;line-height:14.84px;color:#2f9e40;letter-spacing:-0.28px;">5F</div><div class="t" style="left:174.99px;top:256.68px;font-size:10.60px;line-height:14.84px;color:#2f9e40;letter-spacing:-0.28px;">7C</div><div class="t" style="left:197.90px;top:256.68px;font-size:10.60px;line-height:14.84px;color:#c0506a;letter-spacing:-0.28px;">98</div><div class="t" style="left:216.25px;top:256.68px;font-size:10.60px;line-height:14.84px;color:#2f80e4;letter-spacing:-0.28px;">37</div><div class="t" style="left:234.60px;top:256.68px;font-size:10.60px;line-height:14.84px;color:#2f80e4;letter-spacing:-0.28px;">3F</div><div class="t" style="left:252.95px;top:256.68px;font-size:10.60px;line-height:14.84px;color:#2f80e4;letter-spacing:-0.28px;">1F</div><div class="t" style="left:271.30px;top:256.68px;font-size:10.60px;line-height:14.84px;color:#2f9e40;letter-spacing:-0.28px;">57</div><div class="t" style="left:289.65px;top:256.68px;font-size:10.60px;line-height:14.84px;color:#e0201e;letter-spacing:-0.28px;">C9</div><div class="t" style="left:308.00px;top:256.68px;font-size:10.60px;line-height:14.84px;color:#2f9e40;letter-spacing:-0.28px;">7A</div><div class="t" style="left:326.35px;top:256.68px;font-size:10.60px;line-height:14.84px;color:#2f80e4;letter-spacing:-0.28px;">37</div>
<div class="t" style="left:2.90px;top:271.38px;font-size:10.60px;line-height:14.84px;letter-spacing:-0.08px;">0110:</div>
<div class="t" style="left:47.10px;top:271.38px;font-size:10.60px;line-height:14.84px;color:#e0201e;letter-spacing:-0.28px;">C9</div><div class="t" style="left:65.37px;top:271.38px;font-size:10.60px;line-height:14.84px;color:#2f9e40;letter-spacing:-0.28px;">7D</div><div class="t" style="left:83.64px;top:271.38px;font-size:10.60px;line-height:14.84px;color:#c0506a;letter-spacing:-0.28px;">91</div><div class="t" style="left:101.91px;top:271.38px;font-size:10.60px;line-height:14.84px;color:#2f9e40;letter-spacing:-0.28px;">5F</div><div class="t" style="left:120.18px;top:271.38px;font-size:10.60px;line-height:14.84px;color:#2f9e40;letter-spacing:-0.28px;">7C</div><div class="t" style="left:138.45px;top:271.38px;font-size:10.60px;line-height:14.84px;color:#c0506a;letter-spacing:-0.28px;">98</div><div class="t" style="left:156.72px;top:271.38px;font-size:10.60px;line-height:14.84px;color:#2f9e40;letter-spacing:-0.28px;">57</div><div class="t" style="left:174.99px;top:271.38px;font-size:10.60px;line-height:14.84px;color:#e0201e;letter-spacing:-0.28px;">C9</div><div class="t" style="left:197.90px;top:271.38px;font-size:10.60px;line-height:14.84px;color:#2f9e40;letter-spacing:-0.28px;">7A</div><div class="t" style="left:216.25px;top:271.38px;font-size:10.60px;line-height:14.84px;color:#2f80e4;letter-spacing:-0.28px;">37</div><div class="t" style="left:234.60px;top:271.38px;font-size:10.60px;line-height:14.84px;color:#2f80e4;letter-spacing:-0.28px;">3F</div><div class="t" style="left:252.95px;top:271.38px;font-size:10.60px;line-height:14.84px;color:#2f80e4;letter-spacing:-0.28px;">1F</div><div class="t" style="left:271.30px;top:271.38px;font-size:10.60px;line-height:14.84px;color:#2f9e40;letter-spacing:-0.28px;">57</div><div class="t" style="left:289.65px;top:271.38px;font-size:10.60px;line-height:14.84px;color:#e0201e;letter-spacing:-0.28px;">C9</div><div class="t" style="left:308.00px;top:271.38px;font-size:10.60px;line-height:14.84px;color:#2f9e40;letter-spacing:-0.28px;">7B</div><div class="t" style="left:326.35px;top:271.38px;font-size:10.60px;line-height:14.84px;color:#2f80e4;letter-spacing:-0.28px;">1F</div>
</div>
<div class="win" style="left:160.5px;top:171.0px;width:116.0px;height:198.3px;box-shadow:2px 2px 5px rgba(0,0,0,.5);-webkit-text-stroke:.08px currentColor">
<div class="tb tbi" style="height:8.5px"></div>
<div class="tri" style="left:1.91px;top:2.38px;border-width:3.83px 2.39px 0 2.39px"></div>
<div class="t" style="left:10.40px;top:0.50px;font-size:5.00px;line-height:7.00px;letter-spacing:-0.01px;">Руководство</div>
<div class="t" style="left:9.00px;top:9.80px;font-size:5.00px;line-height:7.00px;letter-spacing:0.01px;"><span style="color:#3a1d0e">(</span><span style="color:#6a35c8">b16</span>) - (16 бит) значение (0x0000 - 0xFFFF)</div>
<div class="t" style="left:9.00px;top:17.97px;font-size:5.00px;line-height:7.00px;letter-spacing:0.01px;"><span style="color:#3a1d0e">(</span><span style="color:#6a35c8">adr</span>) - (название маркера, константа)</div>
<div class="tri" style="left:4.40px;top:28.04px;border-width:3.2px 2px 0 2px;border-top-color:#7a2a10"></div>
<div class="t" style="left:11.30px;top:26.14px;font-size:5.00px;line-height:7.00px;color:#7a2a10;letter-spacing:0.01px;">Команды</div>
<div class="tri" style="left:12.00px;top:36.21px;border-width:3.2px 2px 0 2px;border-top-color:#e2641c"></div>
<div class="t" style="left:18.30px;top:34.31px;font-size:5.00px;line-height:7.00px;color:#e2641c;letter-spacing:0.01px;">Команды пересылки данных</div>
<div class="t" style="left:16.30px;top:42.48px;font-size:5.00px;line-height:7.00px;letter-spacing:0.01px;"><span style="color:#b01830">mov </span> (<span style="color:#6a35c8">r</span>, <span style="color:#6a35c8">r</span>) - пересылка данных между</div>
<div class="t" style="left:16.30px;top:50.65px;font-size:5.00px;line-height:7.00px;letter-spacing:0.01px;"><span style="color:#b01830">mvi </span> (<span style="color:#6a35c8">r</span>, <span style="color:#6a35c8">b8</span>) - загрузка константы в</div>
<div class="t" style="left:16.30px;top:58.82px;font-size:5.00px;line-height:7.00px;letter-spacing:0.01px;"><span style="color:#b01830">lxi </span> (<span style="color:#6a35c8">rp</span>, <span style="color:#6a35c8">b16</span>) - загрузка константы</div>
<div class="t" style="left:16.30px;top:66.99px;font-size:5.00px;line-height:7.00px;letter-spacing:0.01px;"><span style="color:#b01830">lda </span> (<span style="color:#6a35c8">b16</span>) - прямая загрузка значения</div>
<div class="t" style="left:16.30px;top:75.16px;font-size:5.00px;line-height:7.00px;letter-spacing:0.01px;"><span style="color:#b01830">lhld</span> (<span style="color:#6a35c8">b16</span>) - прямая загрузка значения</div>
<div class="t" style="left:16.30px;top:83.33px;font-size:5.00px;line-height:7.00px;letter-spacing:0.01px;"><span style="color:#b01830">sta </span> (<span style="color:#6a35c8">b16</span>) - прямая запись содержимого</div>
<div class="t" style="left:16.30px;top:91.50px;font-size:5.00px;line-height:7.00px;letter-spacing:0.01px;"><span style="color:#b01830">shld</span> (<span style="color:#6a35c8">b16</span>) - прямая запись содержимого</div>
<div class="t" style="left:16.30px;top:99.67px;font-size:5.00px;line-height:7.00px;letter-spacing:0.01px;"><span style="color:#b01830">ldax</span> (<span style="color:#6a35c8">BC\DE</span>) - косвенная загрузка</div>
<div class="t" style="left:16.30px;top:107.84px;font-size:5.00px;line-height:7.00px;letter-spacing:0.01px;"><span style="color:#b01830">stax</span> (<span style="color:#6a35c8">BC\DE</span>) - косвенная запись</div>
<div class="t" style="left:16.30px;top:116.01px;font-size:5.00px;line-height:7.00px;letter-spacing:0.01px;"><span style="color:#b01830">xchg</span> - обмен значениями между парами</div>
<div class="t" style="left:16.30px;top:124.18px;font-size:5.00px;line-height:7.00px;letter-spacing:0.01px;"><span style="color:#b01830">pchl</span> - загрузка содержимого пары HL</div>
<div class="t" style="left:16.30px;top:132.35px;font-size:5.00px;line-height:7.00px;letter-spacing:0.01px;"><span style="color:#b01830">sphl</span> - загрузка содержимого пары HL</div>
<div class="tri" style="left:12.00px;top:142.42px;border-width:3.2px 2px 0 2px;border-top-color:#e2641c"></div>
<div class="t" style="left:18.30px;top:140.52px;font-size:5.00px;line-height:7.00px;color:#e2641c;letter-spacing:0.01px;">Суммирование и инкременты</div>
<div class="t" style="left:16.30px;top:148.69px;font-size:5.00px;line-height:7.00px;letter-spacing:0.01px;"><span style="color:#b01830">add</span> (<span style="color:#6a35c8">r</span>)  - сложение [<span style="color:#6a35c8">A</span> = <span style="color:#6a35c8">A</span> + <span style="color:#6a35c8">r</span>]</div>
<div class="t" style="left:16.30px;top:156.86px;font-size:5.00px;line-height:7.00px;letter-spacing:0.01px;"><span style="color:#b01830">adi</span> (<span style="color:#6a35c8">b8</span>) - сложение с константой [A</div>
<div class="t" style="left:16.30px;top:165.03px;font-size:5.00px;line-height:7.00px;letter-spacing:0.01px;"><span style="color:#b01830">adc</span> (<span style="color:#6a35c8">r</span>)  - сложение с учётом переноса</div>
<div class="t" style="left:16.30px;top:173.20px;font-size:5.00px;line-height:7.00px;letter-spacing:0.01px;"><span style="color:#b01830">aci</span> (<span style="color:#6a35c8">b8</span>) - сложение с константой и</div>
<div class="t" style="left:16.30px;top:181.37px;font-size:5.00px;line-height:7.00px;letter-spacing:0.01px;"><span style="color:#b01830">inr</span> (<span style="color:#6a35c8">r</span>)  - инкремент [<span style="color:#6a35c8">r</span> = <span style="color:#6a35c8">r</span> + 1]</div>
<div class="t" style="left:16.30px;top:189.54px;font-size:5.00px;line-height:7.00px;letter-spacing:0.01px;"><span style="color:#b01830">inx</span> (<span style="color:#6a35c8">rp</span>) - инкремент пары регистров</div>
</div>
<div class="win wa" style="left:596.5px;top:166.3px;width:217.0px;height:219.7px">
<div class="tb" style="height:16.4px"><div class="tab" style="left:15px;width:184px"></div>
<div class="bar" style="left:1.93px;top:2.66px;width:9.54px;height:2.19px"></div><div class="tri" style="left:1.93px;top:6.57px;border-width:6.87px 4.77px 0 4.77px"></div>
<div class="t" style="left:17.10px;top:1.93px;font-size:10.10px;line-height:14.14px;letter-spacing:-0.00px;">Продвинутый пиксельный экран</div>
<svg style="left:202.60px;top:3.80px" width="8.80" height="8.80"><path d="M0 0L8.80 8.80M8.80 0L0 8.80" stroke="#4a2c18" stroke-width="1.00" fill="none"/></svg>
</div>
<svg style="left:5.50px;top:16.45px" width="203.2" height="202" viewBox="0 0 203.2 202"><defs><pattern id="pt" width="6.35" height="6.35" patternUnits="userSpaceOnUse"><rect width="6.35" height="6.35" fill="#44d4dc"/><rect x="1" y="0.9" width="4.5" height="4.2" fill="#1428f0"/><path d="M1 0.9H5.5L1 5.1Z" fill="#f4fcff"/><rect y="5.3" width="6.35" height="1.05" fill="#2c9ca4"/><rect x="5.85" width=".5" height="6.35" fill="#0a3040"/></pattern><pattern id="pb" width="6.35" height="3.2" patternUnits="userSpaceOnUse"><rect width="6.35" height="3.2" fill="#e8481c"/><rect y="2.5" width="6.35" height=".7" fill="#401000"/><rect x="4.9" width=".8" height="3.2" fill="#7a1c00"/></pattern><linearGradient id="pg" x1="0" y1="0" x2="0" y2="1"><stop offset="0" stop-color="#6a8c00"/><stop offset=".1" stop-color="#a8d400"/><stop offset=".22" stop-color="#b4dc10"/><stop offset=".26" stop-color="#fbeee6"/><stop offset=".38" stop-color="#fbeee6"/><stop offset=".42" stop-color="#aad400"/><stop offset=".58" stop-color="#a4cc00"/><stop offset=".62" stop-color="#5c7c00"/><stop offset=".72" stop-color="#5c7c00"/><stop offset=".76" stop-color="#9cc800"/><stop offset=".92" stop-color="#94bc00"/><stop offset="1" stop-color="#506c00"/></linearGradient></defs><rect width="203.2" height="202" fill="#000"/><rect x="0.00" y="76.20" width="88.90" height="6.35" fill="url(#pt)"/><rect x="114.30" y="76.20" width="88.90" height="6.35" fill="url(#pt)"/><rect x="0.00" y="120.65" width="25.40" height="6.35" fill="url(#pt)"/><rect x="50.80" y="114.30" width="152.40" height="6.35" fill="url(#pt)"/><rect x="0.00" y="152.40" width="203.20" height="6.35" fill="url(#pt)"/><rect x="0.00" y="190.10" width="203.20" height="11.90" fill="url(#pb)"/><path d="M615.5 245 C624 245 618.5 236.2 627 236.2 L638 236.2" stroke="#587800" stroke-width="13.60" fill="none" transform="translate(-603 -182.50) "/><path d="M615.5 245 C624 245 618.5 236.2 627 236.2 L638 236.2" stroke="#a6d000" stroke-width="11.80" fill="none" transform="translate(-603 -182.50) "/><path d="M615.5 245 C624 245 618.5 236.2 627 236.2 L638 236.2" stroke="#fbeee6" stroke-width="1.90" fill="none" transform="translate(-603 -185.40) "/><path d="M615.5 245 C624 245 618.5 236.2 627 236.2 L638 236.2" stroke="#5c7c00" stroke-width="1.70" fill="none" transform="translate(-603 -180.30) "/><path d="M615.5 245 C624 245 618.5 236.2 627 236.2 L638 236.2" stroke="#587800" stroke-width="13.60" fill="none" transform="translate(-603 -182.50) translate(1409.2 0) scale(-1 1)"/><path d="M615.5 245 C624 245 618.5 236.2 627 236.2 L638 236.2" stroke="#a6d000" stroke-width="11.80" fill="none" transform="translate(-603 -182.50) translate(1409.2 0) scale(-1 1)"/><path d="M615.5 245 C624 245 618.5 236.2 627 236.2 L638 236.2" stroke="#fbeee6" stroke-width="1.90" fill="none" transform="translate(-603 -185.40) translate(1409.2 0) scale(-1 1)"/><path d="M615.5 245 C624 245 618.5 236.2 627 236.2 L638 236.2" stroke="#5c7c00" stroke-width="1.70" fill="none" transform="translate(-603 -180.30) translate(1409.2 0) scale(-1 1)"/><rect x="0.00" y="55.90" width="9.40" height="13.10" fill="url(#pg)"/><rect x="9.20" y="55.20" width="3.70" height="15.00" fill="url(#pg)"/><rect x="34.80" y="45.50" width="3.30" height="16.70" fill="url(#pg)"/><rect x="193.80" y="55.90" width="9.40" height="13.10" fill="url(#pg)"/><rect x="190.30" y="55.20" width="3.70" height="15.00" fill="url(#pg)"/><rect x="165.10" y="45.50" width="3.30" height="16.70" fill="url(#pg)"/><rect x="0.00" y="171.10" width="23.00" height="12.00" fill="url(#pg)"/><rect x="22.60" y="169.90" width="3.40" height="14.40" fill="url(#pg)"/><rect x="49.00" y="173.30" width="7.00" height="2.80" fill="#e02810"/><rect x="48.00" y="175.90" width="9.00" height="4.10" fill="#f0a060"/><rect x="47.00" y="179.80" width="11.00" height="6.20" fill="#2838e0"/><rect x="45.80" y="180.50" width="2.20" height="3.00" fill="#f0a060"/><rect x="57.00" y="180.50" width="2.20" height="3.00" fill="#f0a060"/><rect x="46.50" y="185.80" width="4.50" height="4.20" fill="#e05020"/><rect x="54.00" y="185.80" width="4.50" height="4.20" fill="#e05020"/><rect x="61.00" y="140.00" width="6.00" height="12.10" fill="#4c8c00"/><rect x="62.00" y="141.50" width="3.00" height="3.50" fill="#d8a040"/></svg>
</div>
<div class="win wa" style="left:276.0px;top:137.7px;width:257.4px;height:276.9px">
<div class="tb" style="height:20.6px"><div class="tab" style="left:21.3px;width:147.5px"></div>
<div class="bar" style="left:5.48px;top:4.01px;width:11.24px;height:2.58px"></div><div class="tri" style="left:5.48px;top:8.61px;border-width:8.09px 5.62px 0 5.62px"></div>
<div class="t" style="left:23.90px;top:2.18px;font-size:12.60px;line-height:17.64px;letter-spacing:0.09px;">Символьный экран</div>
<svg style="left:239.50px;top:5.10px" width="11.60" height="11.60"><path d="M0 0L11.60 11.60M11.60 0L0 11.60" stroke="#4a2c18" stroke-width="1.00" fill="none"/></svg>
</div>
<svg style="left:0.10px;top:20.60px" width="256" height="256"><rect width="256" height="256" fill="#000"/><rect x="25.66" y="12.83" width="38.49" height="12.83" fill="#00ee00"/><rect x="64.15" y="12.83" width="12.83" height="12.83" fill="#ff0000"/><rect x="192.45" y="230.94" width="12.83" height="12.83" fill="#ff00e0"/><path d="M0.00 0V256M0 0.00H256M12.83 0V256M0 12.83H256M25.66 0V256M0 25.66H256M38.49 0V256M0 38.49H256M51.32 0V256M0 51.32H256M64.15 0V256M0 64.15H256M76.98 0V256M0 76.98H256M89.81 0V256M0 89.81H256M102.64 0V256M0 102.64H256M115.47 0V256M0 115.47H256M128.30 0V256M0 128.30H256M141.13 0V256M0 141.13H256M153.96 0V256M0 153.96H256M166.79 0V256M0 166.79H256M179.62 0V256M0 179.62H256M192.45 0V256M0 192.45H256M205.28 0V256M0 205.28H256M218.11 0V256M0 218.11H256M230.94 0V256M0 230.94H256M243.77 0V256M0 243.77H256M256.60 0V256M0 256.60H256" stroke="rgba(255,255,255,.17)" stroke-width="1" fill="none"/></svg>
</div>
<div class="win wa" style="left:669.4px;top:288.0px;width:331.3px;height:266.2px;background:#e9dfc9">
<div class="tb" style="height:18.4px"><div class="tab" style="left:17px;width:114px"></div>
<div class="bar" style="left:5.01px;top:3.74px;width:10.28px;height:2.36px"></div><div class="tri" style="left:5.01px;top:7.96px;border-width:7.40px 5.14px 0 5.14px"></div>
<div class="t" style="left:21.50px;top:1.72px;font-size:11.55px;line-height:16.17px;">Редактор кода</div>
<svg style="left:314.80px;top:4.50px" width="10.40" height="10.40"><path d="M0 0L10.40 10.40M10.40 0L0 10.40" stroke="#4a2c18" stroke-width="1.00" fill="none"/></svg>
</div>
<div class="abs" style="left:0;top:19.30px;width:323.60px;height:14.6px;background:#d4c8b0"></div>
<div class="t" style="left:25.34px;top:19.11px;font-size:11.55px;line-height:16.17px;color:#7e1f1f;letter-spacing:0.01px;">1</div>
<div class="t" style="left:47.20px;top:19.11px;font-size:11.55px;line-height:16.17px;letter-spacing:0.01px;"><span style="color:#1f6b2d">;Игра<span style="color:#c3cdb4">·</span>змейка</span></div>
<div class="t" style="left:25.34px;top:34.57px;font-size:11.55px;line-height:16.17px;color:#7e1f1f;letter-spacing:0.01px;">2</div>
<div class="t" style="left:47.20px;top:34.57px;font-size:11.55px;line-height:16.17px;letter-spacing:0.01px;"><span style="color:#1f6b2d">;Группа:<span style="color:#c3cdb4">·</span>ИМ21-05Б</span></div>
<div class="t" style="left:25.34px;top:50.04px;font-size:11.55px;line-height:16.17px;color:#7e1f1f;letter-spacing:0.01px;">3</div>
<div class="t" style="left:47.20px;top:50.04px;font-size:11.55px;line-height:16.17px;letter-spacing:0.01px;"><span style="color:#1f6b2d">;Автор:<span style="color:#c3cdb4">·</span>Коржунов<span style="color:#c3cdb4">·</span>Александр</span></div>
<div class="t" style="left:25.34px;top:65.49px;font-size:11.55px;line-height:16.17px;color:#7e1f1f;letter-spacing:0.01px;">4</div>
<div class="t" style="left:47.20px;top:65.49px;font-size:11.55px;line-height:16.17px;letter-spacing:0.01px;"><span style="color:#1f6b2d">;Управление:</span></div>
<div class="t" style="left:25.34px;top:80.95px;font-size:11.55px;line-height:16.17px;color:#7e1f1f;letter-spacing:0.01px;">5</div>
<div class="t" style="left:47.20px;top:80.95px;font-size:11.55px;line-height:16.17px;letter-spacing:0.01px;"><span style="color:#1f6b2d">;W,<span style="color:#c3cdb4">·</span>A,<span style="color:#c3cdb4">·</span>S,<span style="color:#c3cdb4">·</span>D,<span style="color:#c3cdb4">·</span>Enter</span></div>
<div class="t" style="left:25.34px;top:96.41px;font-size:11.55px;line-height:16.17px;color:#7e1f1f;letter-spacing:0.01px;">6</div>
<div class="t" style="left:25.34px;top:111.87px;font-size:11.55px;line-height:16.17px;color:#7e1f1f;letter-spacing:0.01px;">7</div>
<div class="t" style="left:47.20px;top:111.87px;font-size:11.55px;line-height:16.17px;letter-spacing:0.01px;"><span style="color:#74685a">.adr:</span><span style="color:#66782a">0x0000</span></div>
<div class="t" style="left:25.34px;top:127.33px;font-size:11.55px;line-height:16.17px;color:#7e1f1f;letter-spacing:0.01px;">8</div>
<div class="t" style="left:25.34px;top:142.79px;font-size:11.55px;line-height:16.17px;color:#7e1f1f;letter-spacing:0.01px;">9</div>
<div class="t" style="left:47.20px;top:142.79px;font-size:11.55px;line-height:16.17px;letter-spacing:0.01px;"><span style="color:#d4772a">jmp</span><span style="color:#d5cdb8">·</span><span style="color:#46291a">FirstRunProgramm</span></div>
<div class="t" style="left:18.38px;top:158.26px;font-size:11.55px;line-height:16.17px;color:#7e1f1f;letter-spacing:0.01px;">10</div>
<div class="t" style="left:18.38px;top:173.72px;font-size:11.55px;line-height:16.17px;color:#7e1f1f;letter-spacing:0.01px;">11</div>
<div class="t" style="left:18.38px;top:189.17px;font-size:11.55px;line-height:16.17px;color:#7e1f1f;letter-spacing:0.01px;">12</div>
<div class="t" style="left:18.38px;top:204.64px;font-size:11.55px;line-height:16.17px;color:#7e1f1f;letter-spacing:0.01px;">13</div>
<div class="t" style="left:47.20px;top:204.64px;font-size:11.55px;line-height:16.17px;letter-spacing:0.01px;"><span style="color:#1f6b2d">;<span style="color:#c3cdb4">·</span>Переменные<span style="color:#c3cdb4">·</span>символа</span></div>
<div class="t" style="left:18.38px;top:220.10px;font-size:11.55px;line-height:16.17px;color:#7e1f1f;letter-spacing:0.01px;">14</div>
<div class="t" style="left:47.20px;top:220.10px;font-size:11.55px;line-height:16.17px;letter-spacing:0.01px;"><span style="color:#1c35e0">snake_head_position_x:</span><span style="display:inline-block;position:relative;width:13.92px;height:8px"><svg style="left:0;top:0" width="13.92" height="8"><path d="M1 4.5H12.72M10.32 2L12.72 4.5L10.32 7" stroke="#b7b1a0" stroke-width=".8" fill="none"/></svg></span><span style="color:#74685a">.set:</span><span style="color:#66782a">0x09</span><span style="color:#1f6b2d">; 0x03</span></div>
<div class="t" style="left:18.38px;top:235.55px;font-size:11.55px;line-height:16.17px;color:#7e1f1f;letter-spacing:0.01px;">15</div>
<div class="t" style="left:47.20px;top:235.55px;font-size:11.55px;line-height:16.17px;letter-spacing:0.01px;"><span style="color:#1c35e0">snake_head_position_y:</span><span style="display:inline-block;position:relative;width:13.92px;height:8px"><svg style="left:0;top:0" width="13.92" height="8"><path d="M1 4.5H12.72M10.32 2L12.72 4.5L10.32 7" stroke="#b7b1a0" stroke-width=".8" fill="none"/></svg></span><span style="color:#74685a">.set:</span><span style="color:#66782a">0x09</span><span style="color:#1f6b2d">; 0x04</span></div>
<div class="t" style="left:18.38px;top:251.02px;font-size:11.55px;line-height:16.17px;color:#7e1f1f;letter-spacing:0.01px;">16</div>
<div class="t" style="left:47.20px;top:251.02px;font-size:11.55px;line-height:16.17px;letter-spacing:0.01px;"><span style="color:#1c35e0">snake_head_color:</span><span style="display:inline-block;position:relative;width:20.88px;height:8px"><svg style="left:0;top:0" width="20.88" height="8"><path d="M1 4.5H19.68M17.28 2L19.68 4.5L17.28 7" stroke="#b7b1a0" stroke-width=".8" fill="none"/></svg></span><span style="display:inline-block;position:relative;width:27.84px;height:8px"><svg style="left:0;top:0" width="27.84" height="8"><path d="M1 4.5H26.64M24.24 2L26.64 4.5L24.24 7" stroke="#b7b1a0" stroke-width=".8" fill="none"/></svg></span><span style="color:#74685a">.set:</span><span style="color:#66782a">0b00111111</span><span style="color:#1f6b2d">;</span></div>
<div class="abs" style="left:0;top:258.50px;width:329.60px;height:6px;background:#e9dfc9"></div>
<div class="abs" style="left:2.60px;top:260.00px;width:198.00px;height:3.4px;border-radius:2px;background:#c9bda4"></div>
<div class="abs" style="left:324.90px;top:20.00px;width:3.4px;height:5px;border-radius:2px;background:#b9ad94"></div>
</div>
<div class="win wa" style="left:276.8px;top:445.5px;width:339.2px;height:134.5px;background:#d6c2ba">
<div class="tb" style="height:20.6px"><div class="tab" style="left:21px;width:93px"></div>
<div class="bar" style="left:4.69px;top:4.05px;width:10.81px;height:2.49px"></div><div class="tri" style="left:4.69px;top:8.48px;border-width:7.78px 5.41px 0 5.41px"></div>
<div class="t" style="left:23.20px;top:2.12px;font-size:12.40px;line-height:17.36px;letter-spacing:0.16px;">Мнемо код</div>
<svg style="left:321.60px;top:4.60px" width="11.60" height="11.60"><path d="M0 0L11.60 11.60M11.60 0L0 11.60" stroke="#4a2c18" stroke-width="1.00" fill="none"/></svg>
</div>
<div class="abs" style="left:0;top:20.70px;width:331.70px;height:18.00px;background:#fbe6c6"></div>
<div class="t" style="left:2.50px;top:21.02px;font-size:12.40px;line-height:17.36px;letter-spacing:0.14px;">Адрес</div>
<div class="t" style="left:46.50px;top:21.02px;font-size:12.40px;line-height:17.36px;letter-spacing:0.14px;">Код</div>
<div class="abs" style="left:43.10px;top:20.70px;width:1px;height:18.00px;background:#e3cfb2"></div>
<div class="t" style="left:74.00px;top:21.02px;font-size:12.40px;line-height:17.36px;letter-spacing:0.14px;">Строка кода</div>
<div class="abs" style="left:70.60px;top:20.70px;width:1px;height:18.00px;background:#e3cfb2"></div>
<div class="t" style="left:203.90px;top:21.02px;font-size:12.40px;line-height:17.36px;letter-spacing:0.14px;">Маркер</div>
<div class="abs" style="left:200.50px;top:20.70px;width:1px;height:18.00px;background:#e3cfb2"></div>
<div class="t" style="left:2.50px;top:39.22px;font-size:12.40px;line-height:17.36px;letter-spacing:0.14px;">037e</div>
<div class="t" style="left:46.20px;top:39.22px;font-size:12.40px;line-height:17.36px;letter-spacing:0.14px;">16</div>
<div class="t" style="left:2.50px;top:57.35px;font-size:12.40px;line-height:17.36px;letter-spacing:0.14px;">037f</div>
<div class="t" style="left:46.20px;top:57.35px;font-size:12.40px;line-height:17.36px;letter-spacing:0.14px;">78</div>
<div class="t" style="left:74.10px;top:57.35px;font-size:12.40px;line-height:17.36px;color:#2f9e40;letter-spacing:0.14px;">MOV A B</div>
<div class="t" style="left:204.60px;top:57.35px;font-size:12.40px;line-height:17.36px;letter-spacing:0.14px;">BeginSleep</div>
<div class="t" style="left:2.50px;top:75.48px;font-size:12.40px;line-height:17.36px;letter-spacing:0.14px;">0380</div>
<div class="t" style="left:46.20px;top:75.48px;font-size:12.40px;line-height:17.36px;letter-spacing:0.14px;">fe</div>
<div class="t" style="left:74.10px;top:75.48px;font-size:12.40px;line-height:17.36px;color:#7fb4b4;letter-spacing:0.14px;">CPI 0</div>
<div class="t" style="left:2.50px;top:93.61px;font-size:12.40px;line-height:17.36px;letter-spacing:0.14px;">0381</div>
<div class="t" style="left:46.20px;top:93.61px;font-size:12.40px;line-height:17.36px;letter-spacing:0.14px;">00</div>
<div class="t" style="left:2.50px;top:111.74px;font-size:12.40px;line-height:17.36px;letter-spacing:0.14px;">0382</div>
<div class="t" style="left:46.20px;top:111.74px;font-size:12.40px;line-height:17.36px;letter-spacing:0.14px;">c8</div>
<div class="t" style="left:74.10px;top:111.74px;font-size:12.40px;line-height:17.36px;color:#e0201e;letter-spacing:0.14px;">RZ</div>
<div class="abs" style="left:332.20px;top:20.50px;width:4.8px;height:130px;background:#e6d9c2"></div>
<div class="abs" style="left:332.80px;top:28.50px;width:3.2px;height:5px;border-radius:2px;background:#b9ad94"></div>
</div>
</body></html>
